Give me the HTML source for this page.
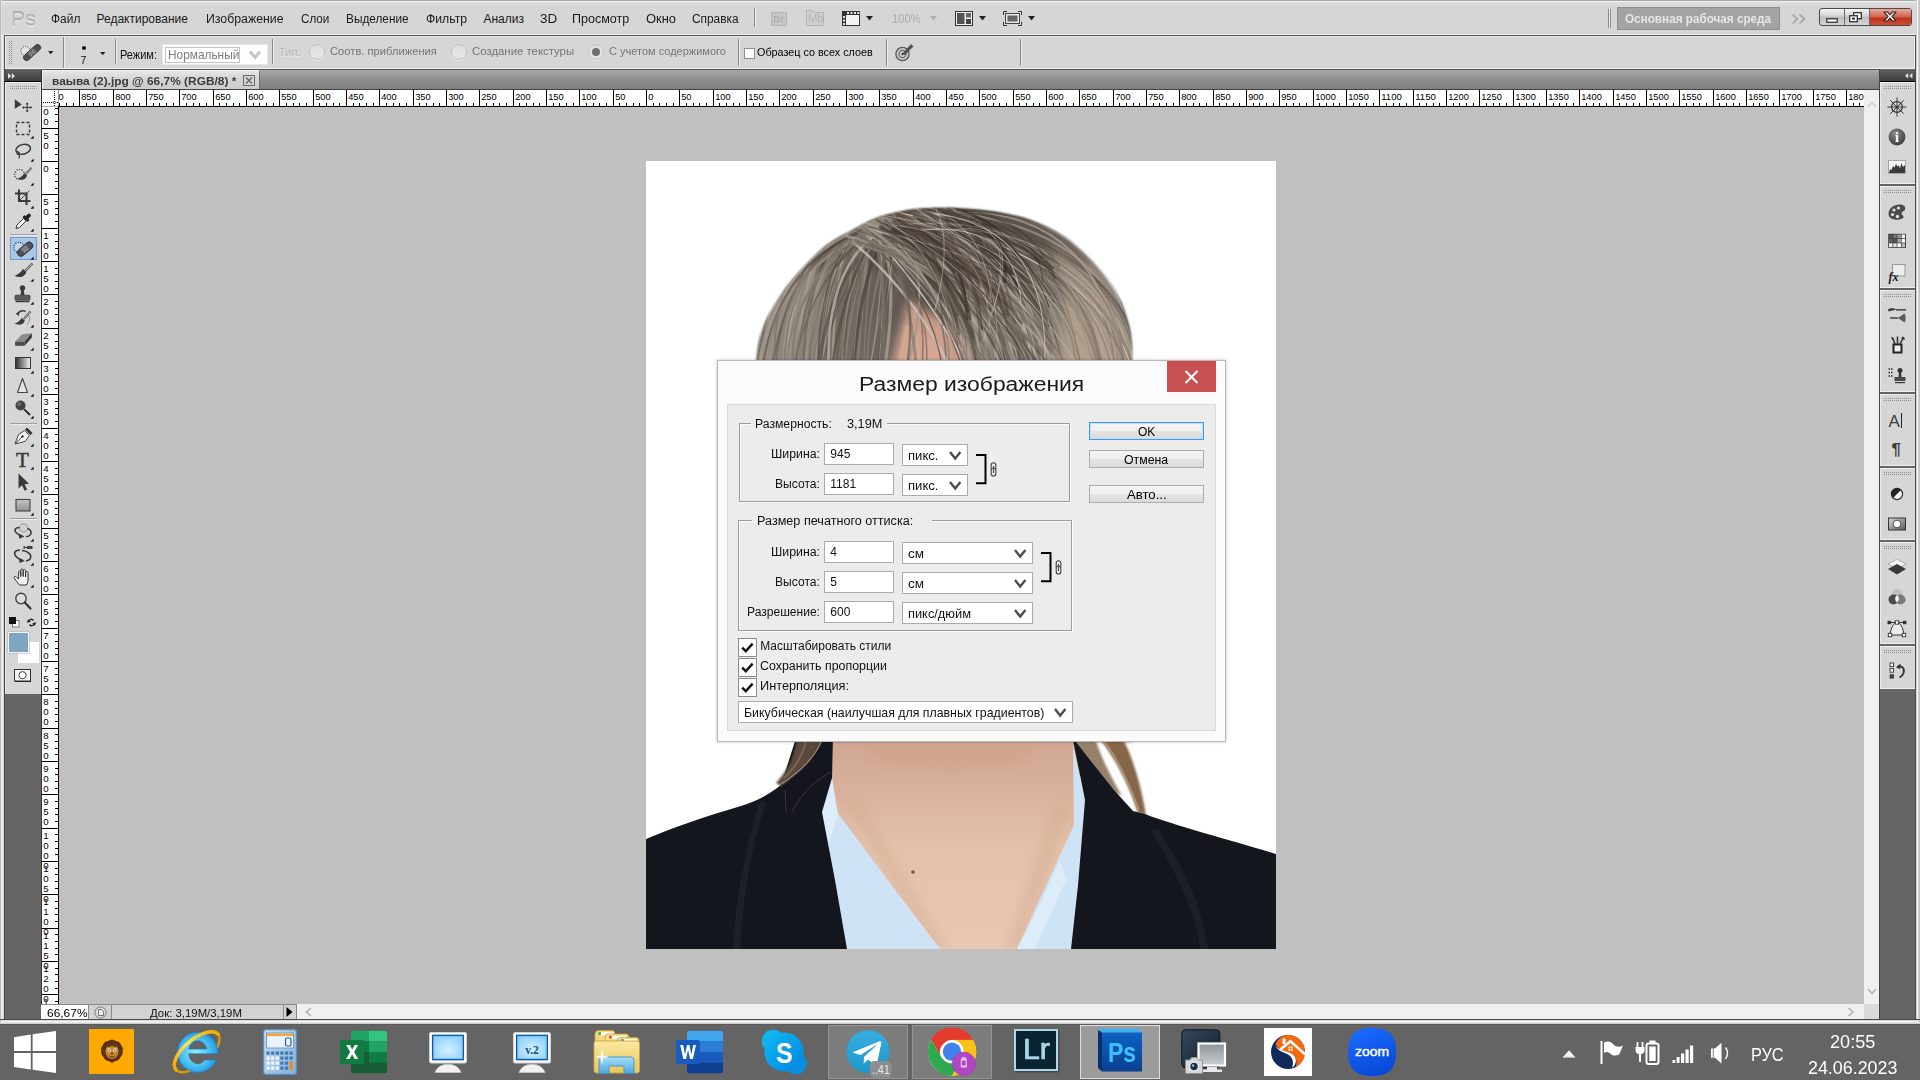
<!DOCTYPE html>
<html lang="ru"><head><meta charset="utf-8"><title>Adobe Photoshop</title>
<style>
html,body{margin:0;padding:0;}
body{width:1920px;height:1080px;overflow:hidden;background:#d6d6d6;position:relative;font-family:"Liberation Sans",sans-serif;}
div,span.t,svg{position:absolute;box-sizing:border-box;}
span.t{white-space:pre;transform-origin:0 50%;}
svg{overflow:visible;}
svg text{font-family:"Liberation Sans",sans-serif;}
</style></head><body>

<div style="left:0px;top:0px;width:1920px;height:1024px;background:#d6d6d6;"></div>
<div style="left:0px;top:0px;width:1920px;height:1px;background:#a8a8a8;"></div>
<div style="left:0px;top:1px;width:1920px;height:1px;background:#f0f0f0;"></div>
<div style="left:0px;top:2px;width:1920px;height:5px;background:linear-gradient(#dfdfdf,#d6d6d6);"></div>
<div style="left:4px;top:34px;width:1912px;height:1px;background:#ececec;"></div>
<div style="left:0px;top:0px;width:1px;height:1024px;background:#bcbcbc;"></div>
<div style="left:1px;top:0px;width:1px;height:1024px;background:#e2e2e2;"></div>
<div style="left:2px;top:35px;width:1px;height:989px;background:#f0f0f0;"></div>
<div style="left:3px;top:35px;width:1px;height:989px;background:#d4d4d4;"></div>
<div style="left:1916px;top:0px;width:1px;height:1024px;background:#d6d6d6;"></div>
<div style="left:1917px;top:0px;width:1px;height:1024px;background:#f4f4f4;"></div>
<div style="left:1918px;top:0px;width:1px;height:1024px;background:#d2d2d2;"></div>
<div style="left:1919px;top:0px;width:1px;height:1024px;background:#c4c4c4;"></div>
<div style="left:0px;top:1019px;width:1920px;height:1px;background:#4a4a4a;"></div>
<div style="left:0px;top:1020px;width:1920px;height:1px;background:#d8d8d8;"></div>
<div style="left:2px;top:1021px;width:1916px;height:1px;background:#f4f4f4;"></div>
<div style="left:0px;top:1022px;width:1920px;height:1px;background:#e6e6e6;"></div>
<div style="left:0px;top:1023px;width:1920px;height:1px;background:#cfcfcf;"></div>
<span class="t" style="left:11.12px;top:8.00px;font-size:21px;line-height:21px;color:#bdbdbd;transform:scaleX(1.0091);text-shadow:0 1px 0 #f4f4f4,0 -1px 0 #a8a8a8;">Ps</span>
<span class="t" style="left:51.22px;top:13.00px;font-size:12px;line-height:12px;color:#1a1a1a;transform:scaleX(0.9952);">Файл</span>
<span class="t" style="left:96.52px;top:13.00px;font-size:12px;line-height:12px;color:#1a1a1a;">Редактирование</span>
<span class="t" style="left:205.50px;top:13.00px;font-size:12px;line-height:12px;color:#1a1a1a;transform:scaleX(1.0260);">Изображение</span>
<span class="t" style="left:301.24px;top:13.00px;font-size:12px;line-height:12px;color:#1a1a1a;transform:scaleX(0.9719);">Слои</span>
<span class="t" style="left:346.13px;top:13.00px;font-size:12px;line-height:12px;color:#1a1a1a;transform:scaleX(0.9854);">Выделение</span>
<span class="t" style="left:425.51px;top:13.00px;font-size:12px;line-height:12px;color:#1a1a1a;transform:scaleX(1.0185);">Фильтр</span>
<span class="t" style="left:483.42px;top:13.00px;font-size:12px;line-height:12px;color:#1a1a1a;">Анализ</span>
<span class="t" style="left:539.92px;top:13.00px;font-size:12px;line-height:12px;color:#1a1a1a;transform:scaleX(1.1251);">3D</span>
<span class="t" style="left:572.49px;top:13.00px;font-size:12px;line-height:12px;color:#1a1a1a;transform:scaleX(1.0448);">Просмотр</span>
<span class="t" style="left:646.46px;top:13.00px;font-size:12px;line-height:12px;color:#1a1a1a;transform:scaleX(1.0780);">Окно</span>
<span class="t" style="left:692.23px;top:13.00px;font-size:12px;line-height:12px;color:#1a1a1a;transform:scaleX(0.9891);">Справка</span>
<div style="left:754px;top:8px;width:1px;height:19px;background:#8a8a8a;"></div>
<div style="left:755px;top:8px;width:1px;height:19px;background:#ececec;"></div>
<div style="left:771px;top:12px;width:16px;height:14px;background:#c6c6c6;border:1px solid #b4b4b4;border-radius:1px;"></div>
<span class="t" style="left:773.27px;top:15.00px;font-size:9px;line-height:9px;color:#ababab;transform:scaleX(1.2410);">Br</span>
<svg style="left:806px;top:10px;" width="18" height="16" viewBox="0 0 18 16"><path d="M0.5 15.5V0.5H6.5L8.5 2.5H17.5V15.5Z" fill="#d0d0d0" stroke="#b4b4b4"/></svg>
<span class="t" style="left:807.87px;top:13.00px;font-size:11.5px;line-height:11.5px;color:#b4b4b4;transform:scaleX(0.9762);">Mb</span>
<svg style="left:842px;top:11px;" width="18" height="15" viewBox="0 0 18 15"><rect x="0.5" y="0.5" width="17" height="14" fill="#f2f2f2" stroke="#333"/><rect x="0" y="0" width="18" height="4" fill="#333"/><rect x="0" y="0" width="4" height="15" fill="#333"/><g fill="#e8e8e8"><rect x="1" y="5" width="2" height="2"/><rect x="1" y="8.5" width="2" height="2"/><rect x="1" y="12" width="2" height="2"/><rect x="5" y="1" width="2" height="2"/><rect x="8.5" y="1" width="2" height="2"/><rect x="12" y="1" width="2" height="2"/><rect x="15.3" y="1" width="2" height="2"/></g></svg>
<svg style="left:866px;top:16px;" width="8" height="5" viewBox="0 0 8 5"><path d="M0 0H7L3.5 4.5Z" fill="#222"/></svg>
<span class="t" style="left:892.27px;top:13.00px;font-size:12px;line-height:12px;color:#ababab;transform:scaleX(0.9305);">100%</span>
<svg style="left:929.5px;top:16px;" width="8" height="5" viewBox="0 0 8 5"><path d="M0 0H7L3.5 4.5Z" fill="#b0b0b0"/></svg>
<svg style="left:955px;top:11px;" width="18" height="15" viewBox="0 0 18 15"><rect x="0.5" y="0.5" width="17" height="14" fill="#f0f0f0" stroke="#333"/><rect x="2" y="2" width="7.5" height="11" fill="#555"/><rect x="11" y="2" width="5" height="4.5" fill="#666"/><rect x="11" y="8" width="5" height="5" fill="#444"/></svg>
<svg style="left:979px;top:16px;" width="8" height="5" viewBox="0 0 8 5"><path d="M0 0H7L3.5 4.5Z" fill="#222"/></svg>
<svg style="left:1003px;top:11px;" width="19" height="15" viewBox="0 0 19 15"><path d="M0.5 4V0.5H4M15 0.5H18.5V4M18.5 11V14.5H15M4 14.5H0.5V11" fill="none" stroke="#333" stroke-width="1"/><rect x="2.5" y="2.5" width="14" height="10" fill="#e8e8e8" stroke="#444"/><rect x="4.5" y="4.5" width="10" height="6" fill="#666"/></svg>
<svg style="left:1027.5px;top:16px;" width="8" height="5" viewBox="0 0 8 5"><path d="M0 0H7L3.5 4.5Z" fill="#222"/></svg>
<div style="left:1608px;top:9px;width:1px;height:19px;background:#8a8a8a;"></div>
<div style="left:1609px;top:9px;width:1px;height:19px;background:#f0f0f0;"></div>
<div style="left:1610px;top:9px;width:1px;height:19px;background:#8a8a8a;"></div>
<div style="left:1617px;top:7px;width:163px;height:23px;background:#a3a3a3;border:1px solid #8f8f8f;"></div>
<span class="t" style="left:1624.74px;top:13.00px;font-size:12px;line-height:12px;color:#e6e6e6;font-weight:bold;transform:scaleX(0.9762);">Основная рабочая среда</span>
<svg style="left:1791px;top:13.5px;" width="15" height="10" viewBox="0 0 15 10"><path d="M0.5 0.5L5 5L0.5 9.5H3L7.5 5L3 0.5ZM7.5 0.5L12 5L7.5 9.5H10L14.5 5L10 0.5Z" fill="#a6a6a6"/></svg>
<div style="left:1819px;top:8px;width:93px;height:18px;border:1px solid #4a4a4a;border-radius:3px;overflow:hidden;background:linear-gradient(#f4f4f4,#d2d2d2 45%,#bcbcbc 50%,#d8d8d8);"><div style="left:24px;top:0;width:1px;height:18px;background:#6a6a6a"></div><div style="left:49px;top:0;width:1px;height:18px;background:#6a6a6a"></div><div style="left:50px;top:0;width:43px;height:18px;background:linear-gradient(#e8a89a,#d0604a 45%,#c0321a 50%,#d4553c);"></div></div>
<svg style="left:1826px;top:18px;" width="13" height="6" viewBox="0 0 13 6"><rect x="0.75" y="0.75" width="10.5" height="3.5" fill="#fff" stroke="#333" stroke-width="1.3"/></svg>
<svg style="left:1849px;top:12px;" width="14" height="11" viewBox="0 0 14 11"><rect x="4.7" y="0.7" width="7.6" height="6" fill="#fff" stroke="#333" stroke-width="1.3"/><rect x="0.7" y="3.7" width="7.6" height="6" fill="#fff" stroke="#333" stroke-width="1.3"/><rect x="3" y="5.6" width="3" height="2" fill="#333"/></svg>
<svg style="left:1883px;top:11px;" width="14" height="11" viewBox="0 0 14 11"><path d="M1 1H4.5L7 3.8L9.5 1H13L9 5.5L13 10H9.5L7 7.2L4.5 10H1L5 5.5Z" fill="#fff" stroke="#3a2a2a" stroke-width="1.2" stroke-linejoin="round"/></svg>
<div style="left:4px;top:35px;width:1912px;height:35px;background:#d6d6d6;border:1px solid #555;"></div>
<div style="left:5px;top:36px;width:1910px;height:1px;background:#e9e9e9;"></div>
<div style="left:5px;top:36px;width:1px;height:32px;background:#ececec;"></div>
<div style="left:5px;top:68px;width:1910px;height:1px;background:#f0f0f0;"></div>
<div style="left:1914px;top:36px;width:1px;height:33px;background:#f0f0f0;"></div>
<svg style="left:9px;top:41px;" width="3" height="24" viewBox="0 0 3 24"><rect x="0" y="0" width="1" height="1" fill="#8e8e8e"/><rect x="2" y="0" width="1" height="1" fill="#8e8e8e"/><rect x="0" y="2" width="1" height="1" fill="#8e8e8e"/><rect x="2" y="2" width="1" height="1" fill="#8e8e8e"/><rect x="0" y="4" width="1" height="1" fill="#8e8e8e"/><rect x="2" y="4" width="1" height="1" fill="#8e8e8e"/><rect x="0" y="6" width="1" height="1" fill="#8e8e8e"/><rect x="2" y="6" width="1" height="1" fill="#8e8e8e"/><rect x="0" y="8" width="1" height="1" fill="#8e8e8e"/><rect x="2" y="8" width="1" height="1" fill="#8e8e8e"/><rect x="0" y="10" width="1" height="1" fill="#8e8e8e"/><rect x="2" y="10" width="1" height="1" fill="#8e8e8e"/><rect x="0" y="12" width="1" height="1" fill="#8e8e8e"/><rect x="2" y="12" width="1" height="1" fill="#8e8e8e"/><rect x="0" y="14" width="1" height="1" fill="#8e8e8e"/><rect x="2" y="14" width="1" height="1" fill="#8e8e8e"/><rect x="0" y="16" width="1" height="1" fill="#8e8e8e"/><rect x="2" y="16" width="1" height="1" fill="#8e8e8e"/><rect x="0" y="18" width="1" height="1" fill="#8e8e8e"/><rect x="2" y="18" width="1" height="1" fill="#8e8e8e"/><rect x="0" y="20" width="1" height="1" fill="#8e8e8e"/><rect x="2" y="20" width="1" height="1" fill="#8e8e8e"/><rect x="0" y="22" width="1" height="1" fill="#8e8e8e"/><rect x="2" y="22" width="1" height="1" fill="#8e8e8e"/></svg>
<svg style="left:20px;top:43px;" width="21" height="19" viewBox="0 0 21 19"><circle cx="5.5" cy="8" r="4.6" fill="#e4e4e4" stroke="#333" stroke-width="1" stroke-dasharray="1 1.3"/><g transform="rotate(-42 12 9.5)"><rect x="1.5" y="6.5" width="21" height="6.2" rx="3.1" fill="#4e4e4e" stroke="#333" stroke-width="0.8"/><rect x="8" y="6.9" width="8" height="5.4" fill="#6e6e6e"/><g fill="#c8c8c8"><circle cx="10" cy="8.4" r="0.55"/><circle cx="14" cy="8.4" r="0.55"/><circle cx="10" cy="10.8" r="0.55"/><circle cx="14" cy="10.8" r="0.55"/><circle cx="12" cy="9.6" r="0.55"/></g></g></svg>
<svg style="left:48px;top:51px;" width="6" height="4" viewBox="0 0 6 4"><path d="M0 0H5.5L2.75 3.2Z" fill="#222"/></svg>
<div style="left:63px;top:37px;width:1px;height:31px;background:#8c8c8c;"></div>
<div style="left:64px;top:37px;width:1px;height:31px;background:#ececec;"></div>
<div style="left:81.5px;top:45.5px;width:4px;height:4px;background:#111;border-radius:2px;"></div>
<span class="t" style="left:80.50px;top:55.00px;font-size:10.5px;line-height:10.5px;color:#111;">7</span>
<svg style="left:100px;top:52px;" width="6" height="4" viewBox="0 0 6 4"><path d="M0 0H5.5L2.75 3.2Z" fill="#222"/></svg>
<div style="left:115px;top:39px;width:1px;height:25px;background:#8c8c8c;"></div>
<div style="left:116px;top:39px;width:1px;height:25px;background:#ececec;"></div>
<span class="t" style="left:119.69px;top:49.00px;font-size:12px;line-height:12px;color:#111;transform:scaleX(0.9164);">Режим:</span>
<div style="left:162px;top:44px;width:106px;height:21px;background:#fdfdfd;border:1px solid #e8e8e8;"></div>
<div style="left:164.5px;top:46.5px;width:75px;height:16px;background:#fff;border:1px solid #c4c4c4;"></div>
<span class="t" style="left:167.63px;top:48.00px;font-size:13px;line-height:13px;color:#7c7c7c;transform:scaleX(0.9121);">Нормальный</span>
<svg style="left:248.5px;top:50px;" width="12" height="10" viewBox="0 0 12 10"><path d="M1 1.5L6 7.4L11 1.5" fill="none" stroke="#c6c6c6" stroke-width="2.9"/></svg>
<div style="left:272px;top:39px;width:1px;height:25px;background:#8c8c8c;"></div>
<div style="left:273px;top:39px;width:1px;height:25px;background:#ececec;"></div>
<span class="t" style="left:278.45px;top:47.00px;font-size:11.5px;line-height:11.5px;color:#b4b4b4;text-shadow:0 1px 0 #f2f2f2;">Тип:</span>
<div style="left:309px;top:44px;width:16px;height:16px;background:linear-gradient(#dedede,#e6e6e6);border:1px solid #c2c2c2;border-radius:8px;box-shadow:0 1px 0 #eeeeee;"></div>
<div style="left:451.2px;top:44px;width:16px;height:16px;background:linear-gradient(#dedede,#e6e6e6);border:1px solid #c2c2c2;border-radius:8px;box-shadow:0 1px 0 #eeeeee;"></div>
<div style="left:588.2px;top:44px;width:16px;height:16px;background:linear-gradient(#dedede,#e6e6e6);border:1px solid #c2c2c2;border-radius:8px;box-shadow:0 1px 0 #eeeeee;"><div style="left:3px;top:3px;width:8px;height:8px;border-radius:4px;background:#6e6e6e"></div></div>
<span class="t" style="left:330.07px;top:46.00px;font-size:11.5px;line-height:11.5px;color:#757575;transform:scaleX(0.9722);">Соотв. приближения</span>
<span class="t" style="left:471.96px;top:46.00px;font-size:11.5px;line-height:11.5px;color:#757575;transform:scaleX(0.9894);">Создание текстуры</span>
<span class="t" style="left:609.08px;top:46.00px;font-size:11.5px;line-height:11.5px;color:#757575;transform:scaleX(0.9568);">С учетом содержимого</span>
<div style="left:738px;top:39px;width:1px;height:27px;background:#8c8c8c;"></div>
<div style="left:739px;top:39px;width:1px;height:27px;background:#ececec;"></div>
<div style="left:744px;top:48px;width:11px;height:11px;background:#fff;border:1px solid #8e8e8e;"></div>
<span class="t" style="left:757.00px;top:47.00px;font-size:11.5px;line-height:11.5px;color:#000;transform:scaleX(0.9384);">Образец со всех слоев</span>
<div style="left:886px;top:39px;width:1px;height:27px;background:#8c8c8c;"></div>
<div style="left:887px;top:39px;width:1px;height:27px;background:#ececec;"></div>
<svg style="left:895px;top:43px;" width="19" height="19" viewBox="0 0 19 19"><circle cx="7.5" cy="11" r="6.6" fill="#d0d0d0" stroke="#555" stroke-width="1.3"/><circle cx="7.5" cy="11" r="3.6" fill="none" stroke="#666" stroke-width="1.2"/><circle cx="7.5" cy="11" r="1.2" fill="#444"/><path d="M8 10.5L16 1.5L18 3.5L9.5 12Z" fill="#555" stroke="#333" stroke-width="0.6"/></svg>
<div style="left:1020px;top:39px;width:1px;height:27px;background:#8c8c8c;"></div>
<div style="left:1021px;top:39px;width:1px;height:27px;background:#ececec;"></div>
<div style="left:4px;top:69px;width:37px;height:950px;background:#656565;"></div>
<div style="left:4px;top:69px;width:1px;height:950px;background:#444;"></div>
<div style="left:5px;top:70px;width:36px;height:11px;background:linear-gradient(#5e5e5e,#3e3e3e);"></div>
<div style="left:5px;top:81px;width:36px;height:1px;background:#000;"></div>
<svg style="left:8px;top:72.5px;" width="8" height="6" viewBox="0 0 8 6"><path d="M0 0L3.2 3L0 6ZM3.8 0L7 3L3.8 6Z" fill="#e0e0e0"/></svg>
<div style="left:5px;top:82px;width:36px;height:612px;background:#d6d6d6;"></div>
<div style="left:5px;top:82px;width:36px;height:1px;background:#f0f0f0;"></div>
<div style="left:5px;top:82px;width:1px;height:612px;background:#ececec;"></div>
<div style="left:40px;top:82px;width:1px;height:612px;background:#e6e6e6;"></div>
<svg style="left:10px;top:86px;" width="28" height="3" viewBox="0 0 28 3"><rect x="0" y="0" width="1" height="1" fill="#8e8e8e"/><rect x="0" y="2" width="1" height="1" fill="#8e8e8e"/><rect x="2" y="0" width="1" height="1" fill="#8e8e8e"/><rect x="2" y="2" width="1" height="1" fill="#8e8e8e"/><rect x="4" y="0" width="1" height="1" fill="#8e8e8e"/><rect x="4" y="2" width="1" height="1" fill="#8e8e8e"/><rect x="6" y="0" width="1" height="1" fill="#8e8e8e"/><rect x="6" y="2" width="1" height="1" fill="#8e8e8e"/><rect x="8" y="0" width="1" height="1" fill="#8e8e8e"/><rect x="8" y="2" width="1" height="1" fill="#8e8e8e"/><rect x="10" y="0" width="1" height="1" fill="#8e8e8e"/><rect x="10" y="2" width="1" height="1" fill="#8e8e8e"/><rect x="12" y="0" width="1" height="1" fill="#8e8e8e"/><rect x="12" y="2" width="1" height="1" fill="#8e8e8e"/><rect x="14" y="0" width="1" height="1" fill="#8e8e8e"/><rect x="14" y="2" width="1" height="1" fill="#8e8e8e"/><rect x="16" y="0" width="1" height="1" fill="#8e8e8e"/><rect x="16" y="2" width="1" height="1" fill="#8e8e8e"/><rect x="18" y="0" width="1" height="1" fill="#8e8e8e"/><rect x="18" y="2" width="1" height="1" fill="#8e8e8e"/><rect x="20" y="0" width="1" height="1" fill="#8e8e8e"/><rect x="20" y="2" width="1" height="1" fill="#8e8e8e"/><rect x="22" y="0" width="1" height="1" fill="#8e8e8e"/><rect x="22" y="2" width="1" height="1" fill="#8e8e8e"/><rect x="24" y="0" width="1" height="1" fill="#8e8e8e"/><rect x="24" y="2" width="1" height="1" fill="#8e8e8e"/><rect x="26" y="0" width="1" height="1" fill="#8e8e8e"/><rect x="26" y="2" width="1" height="1" fill="#8e8e8e"/></svg>
<div style="left:10px;top:234px;width:27px;height:1px;background:#9d9d9d;"></div>
<div style="left:10px;top:235px;width:27px;height:1px;background:#ececec;"></div>
<div style="left:10px;top:423px;width:27px;height:1px;background:#9d9d9d;"></div>
<div style="left:10px;top:424px;width:27px;height:1px;background:#ececec;"></div>
<div style="left:10px;top:518px;width:27px;height:1px;background:#9d9d9d;"></div>
<div style="left:10px;top:519px;width:27px;height:1px;background:#ececec;"></div>
<div style="left:10px;top:237px;width:27px;height:23px;background:#a9c7e8;border:1px solid #6f9dcf;"></div>
<div style="left:1879px;top:69px;width:37px;height:950px;background:#656565;"></div>
<div style="left:1880px;top:70px;width:35px;height:11px;background:linear-gradient(#5e5e5e,#3e3e3e);"></div>
<div style="left:1880px;top:81px;width:35px;height:1px;background:#000;"></div>
<svg style="left:1904.7px;top:72.8px;" width="8" height="6" viewBox="0 0 8 6"><path d="M3.2 0L0 2.7L3.2 5.4ZM7.4 0L4.2 2.7L7.4 5.4Z" fill="#e0e0e0"/></svg>
<div style="left:1880px;top:82px;width:35px;height:102px;background:#d6d6d6;border-top:1px solid #f0f0f0;border-left:1px solid #ececec;border-bottom:1px solid #efefef;"></div>
<svg style="left:1884px;top:86px;" width="28" height="3" viewBox="0 0 28 3"><rect x="0" y="0" width="1" height="1" fill="#8e8e8e"/><rect x="0" y="2" width="1" height="1" fill="#8e8e8e"/><rect x="2" y="0" width="1" height="1" fill="#8e8e8e"/><rect x="2" y="2" width="1" height="1" fill="#8e8e8e"/><rect x="4" y="0" width="1" height="1" fill="#8e8e8e"/><rect x="4" y="2" width="1" height="1" fill="#8e8e8e"/><rect x="6" y="0" width="1" height="1" fill="#8e8e8e"/><rect x="6" y="2" width="1" height="1" fill="#8e8e8e"/><rect x="8" y="0" width="1" height="1" fill="#8e8e8e"/><rect x="8" y="2" width="1" height="1" fill="#8e8e8e"/><rect x="10" y="0" width="1" height="1" fill="#8e8e8e"/><rect x="10" y="2" width="1" height="1" fill="#8e8e8e"/><rect x="12" y="0" width="1" height="1" fill="#8e8e8e"/><rect x="12" y="2" width="1" height="1" fill="#8e8e8e"/><rect x="14" y="0" width="1" height="1" fill="#8e8e8e"/><rect x="14" y="2" width="1" height="1" fill="#8e8e8e"/><rect x="16" y="0" width="1" height="1" fill="#8e8e8e"/><rect x="16" y="2" width="1" height="1" fill="#8e8e8e"/><rect x="18" y="0" width="1" height="1" fill="#8e8e8e"/><rect x="18" y="2" width="1" height="1" fill="#8e8e8e"/><rect x="20" y="0" width="1" height="1" fill="#8e8e8e"/><rect x="20" y="2" width="1" height="1" fill="#8e8e8e"/><rect x="22" y="0" width="1" height="1" fill="#8e8e8e"/><rect x="22" y="2" width="1" height="1" fill="#8e8e8e"/><rect x="24" y="0" width="1" height="1" fill="#8e8e8e"/><rect x="24" y="2" width="1" height="1" fill="#8e8e8e"/><rect x="26" y="0" width="1" height="1" fill="#8e8e8e"/><rect x="26" y="2" width="1" height="1" fill="#8e8e8e"/></svg>
<div style="left:1880px;top:186px;width:35px;height:102px;background:#d6d6d6;border-top:1px solid #f0f0f0;border-left:1px solid #ececec;border-bottom:1px solid #efefef;"></div>
<svg style="left:1884px;top:190px;" width="28" height="3" viewBox="0 0 28 3"><rect x="0" y="0" width="1" height="1" fill="#8e8e8e"/><rect x="0" y="2" width="1" height="1" fill="#8e8e8e"/><rect x="2" y="0" width="1" height="1" fill="#8e8e8e"/><rect x="2" y="2" width="1" height="1" fill="#8e8e8e"/><rect x="4" y="0" width="1" height="1" fill="#8e8e8e"/><rect x="4" y="2" width="1" height="1" fill="#8e8e8e"/><rect x="6" y="0" width="1" height="1" fill="#8e8e8e"/><rect x="6" y="2" width="1" height="1" fill="#8e8e8e"/><rect x="8" y="0" width="1" height="1" fill="#8e8e8e"/><rect x="8" y="2" width="1" height="1" fill="#8e8e8e"/><rect x="10" y="0" width="1" height="1" fill="#8e8e8e"/><rect x="10" y="2" width="1" height="1" fill="#8e8e8e"/><rect x="12" y="0" width="1" height="1" fill="#8e8e8e"/><rect x="12" y="2" width="1" height="1" fill="#8e8e8e"/><rect x="14" y="0" width="1" height="1" fill="#8e8e8e"/><rect x="14" y="2" width="1" height="1" fill="#8e8e8e"/><rect x="16" y="0" width="1" height="1" fill="#8e8e8e"/><rect x="16" y="2" width="1" height="1" fill="#8e8e8e"/><rect x="18" y="0" width="1" height="1" fill="#8e8e8e"/><rect x="18" y="2" width="1" height="1" fill="#8e8e8e"/><rect x="20" y="0" width="1" height="1" fill="#8e8e8e"/><rect x="20" y="2" width="1" height="1" fill="#8e8e8e"/><rect x="22" y="0" width="1" height="1" fill="#8e8e8e"/><rect x="22" y="2" width="1" height="1" fill="#8e8e8e"/><rect x="24" y="0" width="1" height="1" fill="#8e8e8e"/><rect x="24" y="2" width="1" height="1" fill="#8e8e8e"/><rect x="26" y="0" width="1" height="1" fill="#8e8e8e"/><rect x="26" y="2" width="1" height="1" fill="#8e8e8e"/></svg>
<div style="left:1880px;top:290px;width:35px;height:102px;background:#d6d6d6;border-top:1px solid #f0f0f0;border-left:1px solid #ececec;border-bottom:1px solid #efefef;"></div>
<svg style="left:1884px;top:294px;" width="28" height="3" viewBox="0 0 28 3"><rect x="0" y="0" width="1" height="1" fill="#8e8e8e"/><rect x="0" y="2" width="1" height="1" fill="#8e8e8e"/><rect x="2" y="0" width="1" height="1" fill="#8e8e8e"/><rect x="2" y="2" width="1" height="1" fill="#8e8e8e"/><rect x="4" y="0" width="1" height="1" fill="#8e8e8e"/><rect x="4" y="2" width="1" height="1" fill="#8e8e8e"/><rect x="6" y="0" width="1" height="1" fill="#8e8e8e"/><rect x="6" y="2" width="1" height="1" fill="#8e8e8e"/><rect x="8" y="0" width="1" height="1" fill="#8e8e8e"/><rect x="8" y="2" width="1" height="1" fill="#8e8e8e"/><rect x="10" y="0" width="1" height="1" fill="#8e8e8e"/><rect x="10" y="2" width="1" height="1" fill="#8e8e8e"/><rect x="12" y="0" width="1" height="1" fill="#8e8e8e"/><rect x="12" y="2" width="1" height="1" fill="#8e8e8e"/><rect x="14" y="0" width="1" height="1" fill="#8e8e8e"/><rect x="14" y="2" width="1" height="1" fill="#8e8e8e"/><rect x="16" y="0" width="1" height="1" fill="#8e8e8e"/><rect x="16" y="2" width="1" height="1" fill="#8e8e8e"/><rect x="18" y="0" width="1" height="1" fill="#8e8e8e"/><rect x="18" y="2" width="1" height="1" fill="#8e8e8e"/><rect x="20" y="0" width="1" height="1" fill="#8e8e8e"/><rect x="20" y="2" width="1" height="1" fill="#8e8e8e"/><rect x="22" y="0" width="1" height="1" fill="#8e8e8e"/><rect x="22" y="2" width="1" height="1" fill="#8e8e8e"/><rect x="24" y="0" width="1" height="1" fill="#8e8e8e"/><rect x="24" y="2" width="1" height="1" fill="#8e8e8e"/><rect x="26" y="0" width="1" height="1" fill="#8e8e8e"/><rect x="26" y="2" width="1" height="1" fill="#8e8e8e"/></svg>
<div style="left:1880px;top:394px;width:35px;height:72px;background:#d6d6d6;border-top:1px solid #f0f0f0;border-left:1px solid #ececec;border-bottom:1px solid #efefef;"></div>
<svg style="left:1884px;top:398px;" width="28" height="3" viewBox="0 0 28 3"><rect x="0" y="0" width="1" height="1" fill="#8e8e8e"/><rect x="0" y="2" width="1" height="1" fill="#8e8e8e"/><rect x="2" y="0" width="1" height="1" fill="#8e8e8e"/><rect x="2" y="2" width="1" height="1" fill="#8e8e8e"/><rect x="4" y="0" width="1" height="1" fill="#8e8e8e"/><rect x="4" y="2" width="1" height="1" fill="#8e8e8e"/><rect x="6" y="0" width="1" height="1" fill="#8e8e8e"/><rect x="6" y="2" width="1" height="1" fill="#8e8e8e"/><rect x="8" y="0" width="1" height="1" fill="#8e8e8e"/><rect x="8" y="2" width="1" height="1" fill="#8e8e8e"/><rect x="10" y="0" width="1" height="1" fill="#8e8e8e"/><rect x="10" y="2" width="1" height="1" fill="#8e8e8e"/><rect x="12" y="0" width="1" height="1" fill="#8e8e8e"/><rect x="12" y="2" width="1" height="1" fill="#8e8e8e"/><rect x="14" y="0" width="1" height="1" fill="#8e8e8e"/><rect x="14" y="2" width="1" height="1" fill="#8e8e8e"/><rect x="16" y="0" width="1" height="1" fill="#8e8e8e"/><rect x="16" y="2" width="1" height="1" fill="#8e8e8e"/><rect x="18" y="0" width="1" height="1" fill="#8e8e8e"/><rect x="18" y="2" width="1" height="1" fill="#8e8e8e"/><rect x="20" y="0" width="1" height="1" fill="#8e8e8e"/><rect x="20" y="2" width="1" height="1" fill="#8e8e8e"/><rect x="22" y="0" width="1" height="1" fill="#8e8e8e"/><rect x="22" y="2" width="1" height="1" fill="#8e8e8e"/><rect x="24" y="0" width="1" height="1" fill="#8e8e8e"/><rect x="24" y="2" width="1" height="1" fill="#8e8e8e"/><rect x="26" y="0" width="1" height="1" fill="#8e8e8e"/><rect x="26" y="2" width="1" height="1" fill="#8e8e8e"/></svg>
<div style="left:1880px;top:468px;width:35px;height:72px;background:#d6d6d6;border-top:1px solid #f0f0f0;border-left:1px solid #ececec;border-bottom:1px solid #efefef;"></div>
<svg style="left:1884px;top:472px;" width="28" height="3" viewBox="0 0 28 3"><rect x="0" y="0" width="1" height="1" fill="#8e8e8e"/><rect x="0" y="2" width="1" height="1" fill="#8e8e8e"/><rect x="2" y="0" width="1" height="1" fill="#8e8e8e"/><rect x="2" y="2" width="1" height="1" fill="#8e8e8e"/><rect x="4" y="0" width="1" height="1" fill="#8e8e8e"/><rect x="4" y="2" width="1" height="1" fill="#8e8e8e"/><rect x="6" y="0" width="1" height="1" fill="#8e8e8e"/><rect x="6" y="2" width="1" height="1" fill="#8e8e8e"/><rect x="8" y="0" width="1" height="1" fill="#8e8e8e"/><rect x="8" y="2" width="1" height="1" fill="#8e8e8e"/><rect x="10" y="0" width="1" height="1" fill="#8e8e8e"/><rect x="10" y="2" width="1" height="1" fill="#8e8e8e"/><rect x="12" y="0" width="1" height="1" fill="#8e8e8e"/><rect x="12" y="2" width="1" height="1" fill="#8e8e8e"/><rect x="14" y="0" width="1" height="1" fill="#8e8e8e"/><rect x="14" y="2" width="1" height="1" fill="#8e8e8e"/><rect x="16" y="0" width="1" height="1" fill="#8e8e8e"/><rect x="16" y="2" width="1" height="1" fill="#8e8e8e"/><rect x="18" y="0" width="1" height="1" fill="#8e8e8e"/><rect x="18" y="2" width="1" height="1" fill="#8e8e8e"/><rect x="20" y="0" width="1" height="1" fill="#8e8e8e"/><rect x="20" y="2" width="1" height="1" fill="#8e8e8e"/><rect x="22" y="0" width="1" height="1" fill="#8e8e8e"/><rect x="22" y="2" width="1" height="1" fill="#8e8e8e"/><rect x="24" y="0" width="1" height="1" fill="#8e8e8e"/><rect x="24" y="2" width="1" height="1" fill="#8e8e8e"/><rect x="26" y="0" width="1" height="1" fill="#8e8e8e"/><rect x="26" y="2" width="1" height="1" fill="#8e8e8e"/></svg>
<div style="left:1880px;top:542px;width:35px;height:102px;background:#d6d6d6;border-top:1px solid #f0f0f0;border-left:1px solid #ececec;border-bottom:1px solid #efefef;"></div>
<svg style="left:1884px;top:546px;" width="28" height="3" viewBox="0 0 28 3"><rect x="0" y="0" width="1" height="1" fill="#8e8e8e"/><rect x="0" y="2" width="1" height="1" fill="#8e8e8e"/><rect x="2" y="0" width="1" height="1" fill="#8e8e8e"/><rect x="2" y="2" width="1" height="1" fill="#8e8e8e"/><rect x="4" y="0" width="1" height="1" fill="#8e8e8e"/><rect x="4" y="2" width="1" height="1" fill="#8e8e8e"/><rect x="6" y="0" width="1" height="1" fill="#8e8e8e"/><rect x="6" y="2" width="1" height="1" fill="#8e8e8e"/><rect x="8" y="0" width="1" height="1" fill="#8e8e8e"/><rect x="8" y="2" width="1" height="1" fill="#8e8e8e"/><rect x="10" y="0" width="1" height="1" fill="#8e8e8e"/><rect x="10" y="2" width="1" height="1" fill="#8e8e8e"/><rect x="12" y="0" width="1" height="1" fill="#8e8e8e"/><rect x="12" y="2" width="1" height="1" fill="#8e8e8e"/><rect x="14" y="0" width="1" height="1" fill="#8e8e8e"/><rect x="14" y="2" width="1" height="1" fill="#8e8e8e"/><rect x="16" y="0" width="1" height="1" fill="#8e8e8e"/><rect x="16" y="2" width="1" height="1" fill="#8e8e8e"/><rect x="18" y="0" width="1" height="1" fill="#8e8e8e"/><rect x="18" y="2" width="1" height="1" fill="#8e8e8e"/><rect x="20" y="0" width="1" height="1" fill="#8e8e8e"/><rect x="20" y="2" width="1" height="1" fill="#8e8e8e"/><rect x="22" y="0" width="1" height="1" fill="#8e8e8e"/><rect x="22" y="2" width="1" height="1" fill="#8e8e8e"/><rect x="24" y="0" width="1" height="1" fill="#8e8e8e"/><rect x="24" y="2" width="1" height="1" fill="#8e8e8e"/><rect x="26" y="0" width="1" height="1" fill="#8e8e8e"/><rect x="26" y="2" width="1" height="1" fill="#8e8e8e"/></svg>
<div style="left:1880px;top:646px;width:35px;height:43px;background:#d6d6d6;border-top:1px solid #f0f0f0;border-left:1px solid #ececec;border-bottom:1px solid #efefef;"></div>
<svg style="left:1884px;top:650px;" width="28" height="3" viewBox="0 0 28 3"><rect x="0" y="0" width="1" height="1" fill="#8e8e8e"/><rect x="0" y="2" width="1" height="1" fill="#8e8e8e"/><rect x="2" y="0" width="1" height="1" fill="#8e8e8e"/><rect x="2" y="2" width="1" height="1" fill="#8e8e8e"/><rect x="4" y="0" width="1" height="1" fill="#8e8e8e"/><rect x="4" y="2" width="1" height="1" fill="#8e8e8e"/><rect x="6" y="0" width="1" height="1" fill="#8e8e8e"/><rect x="6" y="2" width="1" height="1" fill="#8e8e8e"/><rect x="8" y="0" width="1" height="1" fill="#8e8e8e"/><rect x="8" y="2" width="1" height="1" fill="#8e8e8e"/><rect x="10" y="0" width="1" height="1" fill="#8e8e8e"/><rect x="10" y="2" width="1" height="1" fill="#8e8e8e"/><rect x="12" y="0" width="1" height="1" fill="#8e8e8e"/><rect x="12" y="2" width="1" height="1" fill="#8e8e8e"/><rect x="14" y="0" width="1" height="1" fill="#8e8e8e"/><rect x="14" y="2" width="1" height="1" fill="#8e8e8e"/><rect x="16" y="0" width="1" height="1" fill="#8e8e8e"/><rect x="16" y="2" width="1" height="1" fill="#8e8e8e"/><rect x="18" y="0" width="1" height="1" fill="#8e8e8e"/><rect x="18" y="2" width="1" height="1" fill="#8e8e8e"/><rect x="20" y="0" width="1" height="1" fill="#8e8e8e"/><rect x="20" y="2" width="1" height="1" fill="#8e8e8e"/><rect x="22" y="0" width="1" height="1" fill="#8e8e8e"/><rect x="22" y="2" width="1" height="1" fill="#8e8e8e"/><rect x="24" y="0" width="1" height="1" fill="#8e8e8e"/><rect x="24" y="2" width="1" height="1" fill="#8e8e8e"/><rect x="26" y="0" width="1" height="1" fill="#8e8e8e"/><rect x="26" y="2" width="1" height="1" fill="#8e8e8e"/></svg>
<div style="left:1879px;top:69px;width:1px;height:950px;background:#444;"></div>
<div style="left:1915px;top:35px;width:1px;height:984px;background:#4c4c4c;"></div>
<div style="left:41px;top:69px;width:1838px;height:1px;background:#555;"></div>
<div style="left:41px;top:70px;width:1838px;height:19px;background:linear-gradient(#a8a8a8,#8c8c8c 55%,#7e7e7e);"></div>
<div style="left:42px;top:70px;width:218px;height:19px;background:linear-gradient(#e6e6e6,#d6d6d6 40%,#cccccc);border-right:1px solid #6e6e6e;border-top:1px solid #f2f2f2;border-left:1px solid #f0f0f0;"></div>
<span class="t" style="left:51.73px;top:76.00px;font-size:11px;line-height:11px;color:#3c3c3c;font-weight:bold;transform:scaleX(1.0825);">ваыва (2).jpg @ 66,7% (RGB/8) *</span>
<svg style="left:243px;top:75px;" width="12" height="11" viewBox="0 0 12 11"><rect x="0.5" y="0.5" width="11" height="10" fill="#d4d4d4" stroke="#6c6c6c"/><path d="M3 2.5L9 8.5M9 2.5L3 8.5" stroke="#666" stroke-width="1.3"/></svg>
<div style="left:41px;top:89px;width:1838px;height:1px;background:#444;"></div>
<div style="left:41px;top:70px;width:1px;height:949px;background:#333;"></div>
<div style="left:59px;top:107px;width:1805px;height:897px;background:#c0c0c0;"></div>
<div style="left:42px;top:90px;width:1822px;height:16px;background:#fff;"></div>
<div style="left:42px;top:90px;width:16px;height:914px;background:#fff;"></div>
<svg style="left:42px;top:90px;" width="16" height="16" viewBox="0 0 16 16"><rect x="1" y="12" width="1" height="1" fill="#000"/><rect x="3" y="12" width="1" height="1" fill="#000"/><rect x="5" y="12" width="1" height="1" fill="#000"/><rect x="7" y="12" width="1" height="1" fill="#000"/><rect x="9" y="12" width="1" height="1" fill="#000"/><rect x="11" y="12" width="1" height="1" fill="#000"/><rect x="13" y="12" width="1" height="1" fill="#000"/><rect x="15" y="12" width="1" height="1" fill="#000"/><rect x="12" y="1" width="1" height="1" fill="#000"/><rect x="12" y="3" width="1" height="1" fill="#000"/><rect x="12" y="5" width="1" height="1" fill="#000"/><rect x="12" y="7" width="1" height="1" fill="#000"/><rect x="12" y="9" width="1" height="1" fill="#000"/><rect x="12" y="11" width="1" height="1" fill="#000"/><rect x="12" y="13" width="1" height="1" fill="#000"/><rect x="12" y="15" width="1" height="1" fill="#000"/><path d="M12.5 11L14 12.5L12.5 14L11 12.5Z" fill="#fff" stroke="#000" stroke-width="0.7"/></svg>
<div style="left:58px;top:90px;width:1px;height:16px;background:#9a9a9a;"></div>
<div style="left:59px;top:90px;width:1805px;height:16px;overflow:hidden;"><svg style="left:-59px;top:-90px" width="1920" height="120" viewBox="0 0 1920 120"><path d="M59.5 103V106 M66.5 103V106 M73.5 103V106 M79.5 90V106 M86.5 103V106 M93.5 103V106 M99.5 103V106 M106.5 103V106 M113.5 90V106 M119.5 103V106 M126.5 103V106 M133.5 103V106 M139.5 103V106 M146.5 90V106 M153.5 103V106 M159.5 103V106 M166.5 103V106 M173.5 103V106 M179.5 90V106 M186.5 103V106 M193.5 103V106 M199.5 103V106 M206.5 103V106 M213.5 90V106 M219.5 103V106 M226.5 103V106 M233.5 103V106 M239.5 103V106 M246.5 90V106 M253.5 103V106 M259.5 103V106 M266.5 103V106 M273.5 103V106 M279.5 90V106 M286.5 103V106 M293.5 103V106 M299.5 103V106 M306.5 103V106 M313.5 90V106 M319.5 103V106 M326.5 103V106 M333.5 103V106 M339.5 103V106 M346.5 90V106 M353.5 103V106 M359.5 103V106 M366.5 103V106 M373.5 103V106 M379.5 90V106 M386.5 103V106 M393.5 103V106 M399.5 103V106 M406.5 103V106 M413.5 90V106 M419.5 103V106 M426.5 103V106 M433.5 103V106 M439.5 103V106 M446.5 90V106 M453.5 103V106 M459.5 103V106 M466.5 103V106 M473.5 103V106 M479.5 90V106 M486.5 103V106 M493.5 103V106 M499.5 103V106 M506.5 103V106 M513.5 90V106 M519.5 103V106 M526.5 103V106 M533.5 103V106 M539.5 103V106 M546.5 90V106 M553.5 103V106 M559.5 103V106 M566.5 103V106 M573.5 103V106 M579.5 90V106 M586.5 103V106 M593.5 103V106 M599.5 103V106 M606.5 103V106 M613.5 90V106 M619.5 103V106 M626.5 103V106 M633.5 103V106 M639.5 103V106 M646.5 90V106 M653.5 103V106 M659.5 103V106 M666.5 103V106 M673.5 103V106 M679.5 90V106 M686.5 103V106 M693.5 103V106 M699.5 103V106 M706.5 103V106 M713.5 90V106 M719.5 103V106 M726.5 103V106 M733.5 103V106 M739.5 103V106 M746.5 90V106 M753.5 103V106 M759.5 103V106 M766.5 103V106 M773.5 103V106 M779.5 90V106 M786.5 103V106 M793.5 103V106 M799.5 103V106 M806.5 103V106 M813.5 90V106 M819.5 103V106 M826.5 103V106 M833.5 103V106 M839.5 103V106 M846.5 90V106 M853.5 103V106 M859.5 103V106 M866.5 103V106 M873.5 103V106 M879.5 90V106 M886.5 103V106 M893.5 103V106 M899.5 103V106 M906.5 103V106 M913.5 90V106 M919.5 103V106 M926.5 103V106 M933.5 103V106 M939.5 103V106 M946.5 90V106 M953.5 103V106 M959.5 103V106 M966.5 103V106 M973.5 103V106 M979.5 90V106 M986.5 103V106 M993.5 103V106 M999.5 103V106 M1006.5 103V106 M1013.5 90V106 M1019.5 103V106 M1026.5 103V106 M1033.5 103V106 M1039.5 103V106 M1046.5 90V106 M1053.5 103V106 M1059.5 103V106 M1066.5 103V106 M1073.5 103V106 M1079.5 90V106 M1086.5 103V106 M1093.5 103V106 M1099.5 103V106 M1106.5 103V106 M1113.5 90V106 M1119.5 103V106 M1126.5 103V106 M1133.5 103V106 M1139.5 103V106 M1146.5 90V106 M1153.5 103V106 M1159.5 103V106 M1166.5 103V106 M1173.5 103V106 M1179.5 90V106 M1186.5 103V106 M1193.5 103V106 M1199.5 103V106 M1206.5 103V106 M1213.5 90V106 M1219.5 103V106 M1226.5 103V106 M1233.5 103V106 M1239.5 103V106 M1246.5 90V106 M1253.5 103V106 M1259.5 103V106 M1266.5 103V106 M1273.5 103V106 M1279.5 90V106 M1286.5 103V106 M1293.5 103V106 M1299.5 103V106 M1306.5 103V106 M1313.5 90V106 M1319.5 103V106 M1326.5 103V106 M1333.5 103V106 M1339.5 103V106 M1346.5 90V106 M1353.5 103V106 M1359.5 103V106 M1366.5 103V106 M1373.5 103V106 M1379.5 90V106 M1386.5 103V106 M1393.5 103V106 M1399.5 103V106 M1406.5 103V106 M1413.5 90V106 M1419.5 103V106 M1426.5 103V106 M1433.5 103V106 M1439.5 103V106 M1446.5 90V106 M1453.5 103V106 M1459.5 103V106 M1466.5 103V106 M1473.5 103V106 M1479.5 90V106 M1486.5 103V106 M1493.5 103V106 M1499.5 103V106 M1506.5 103V106 M1513.5 90V106 M1519.5 103V106 M1526.5 103V106 M1533.5 103V106 M1539.5 103V106 M1546.5 90V106 M1553.5 103V106 M1559.5 103V106 M1566.5 103V106 M1573.5 103V106 M1579.5 90V106 M1586.5 103V106 M1593.5 103V106 M1599.5 103V106 M1606.5 103V106 M1613.5 90V106 M1619.5 103V106 M1626.5 103V106 M1633.5 103V106 M1639.5 103V106 M1646.5 90V106 M1653.5 103V106 M1659.5 103V106 M1666.5 103V106 M1673.5 103V106 M1679.5 90V106 M1686.5 103V106 M1693.5 103V106 M1699.5 103V106 M1706.5 103V106 M1713.5 90V106 M1719.5 103V106 M1726.5 103V106 M1733.5 103V106 M1739.5 103V106 M1746.5 90V106 M1753.5 103V106 M1759.5 103V106 M1766.5 103V106 M1773.5 103V106 M1779.5 90V106 M1786.5 103V106 M1793.5 103V106 M1799.5 103V106 M1806.5 103V106 M1813.5 90V106 M1819.5 103V106 M1826.5 103V106 M1833.5 103V106 M1839.5 103V106 M1846.5 90V106 M1853.5 103V106 M1859.5 103V106" stroke="#000" stroke-width="1" fill="none"/><text x="48.2" y="100" font-size="9.7" textLength="15.5" lengthAdjust="spacingAndGlyphs" fill="#000">900</text><text x="81.2" y="100" font-size="9.7" textLength="15.5" lengthAdjust="spacingAndGlyphs" fill="#000">850</text><text x="115.2" y="100" font-size="9.7" textLength="15.5" lengthAdjust="spacingAndGlyphs" fill="#000">800</text><text x="148.2" y="100" font-size="9.7" textLength="15.5" lengthAdjust="spacingAndGlyphs" fill="#000">750</text><text x="181.2" y="100" font-size="9.7" textLength="15.5" lengthAdjust="spacingAndGlyphs" fill="#000">700</text><text x="215.2" y="100" font-size="9.7" textLength="15.5" lengthAdjust="spacingAndGlyphs" fill="#000">650</text><text x="248.2" y="100" font-size="9.7" textLength="15.5" lengthAdjust="spacingAndGlyphs" fill="#000">600</text><text x="281.2" y="100" font-size="9.7" textLength="15.5" lengthAdjust="spacingAndGlyphs" fill="#000">550</text><text x="315.2" y="100" font-size="9.7" textLength="15.5" lengthAdjust="spacingAndGlyphs" fill="#000">500</text><text x="348.2" y="100" font-size="9.7" textLength="15.5" lengthAdjust="spacingAndGlyphs" fill="#000">450</text><text x="381.2" y="100" font-size="9.7" textLength="15.5" lengthAdjust="spacingAndGlyphs" fill="#000">400</text><text x="415.2" y="100" font-size="9.7" textLength="15.5" lengthAdjust="spacingAndGlyphs" fill="#000">350</text><text x="448.2" y="100" font-size="9.7" textLength="15.5" lengthAdjust="spacingAndGlyphs" fill="#000">300</text><text x="481.2" y="100" font-size="9.7" textLength="15.5" lengthAdjust="spacingAndGlyphs" fill="#000">250</text><text x="515.2" y="100" font-size="9.7" textLength="15.5" lengthAdjust="spacingAndGlyphs" fill="#000">200</text><text x="548.2" y="100" font-size="9.7" textLength="15.5" lengthAdjust="spacingAndGlyphs" fill="#000">150</text><text x="581.2" y="100" font-size="9.7" textLength="15.5" lengthAdjust="spacingAndGlyphs" fill="#000">100</text><text x="615.2" y="100" font-size="9.7" textLength="10.3" lengthAdjust="spacingAndGlyphs" fill="#000">50</text><text x="648.2" y="100" font-size="9.7" textLength="5.2" lengthAdjust="spacingAndGlyphs" fill="#000">0</text><text x="681.2" y="100" font-size="9.7" textLength="10.3" lengthAdjust="spacingAndGlyphs" fill="#000">50</text><text x="715.2" y="100" font-size="9.7" textLength="15.5" lengthAdjust="spacingAndGlyphs" fill="#000">100</text><text x="748.2" y="100" font-size="9.7" textLength="15.5" lengthAdjust="spacingAndGlyphs" fill="#000">150</text><text x="781.2" y="100" font-size="9.7" textLength="15.5" lengthAdjust="spacingAndGlyphs" fill="#000">200</text><text x="815.2" y="100" font-size="9.7" textLength="15.5" lengthAdjust="spacingAndGlyphs" fill="#000">250</text><text x="848.2" y="100" font-size="9.7" textLength="15.5" lengthAdjust="spacingAndGlyphs" fill="#000">300</text><text x="881.2" y="100" font-size="9.7" textLength="15.5" lengthAdjust="spacingAndGlyphs" fill="#000">350</text><text x="915.2" y="100" font-size="9.7" textLength="15.5" lengthAdjust="spacingAndGlyphs" fill="#000">400</text><text x="948.2" y="100" font-size="9.7" textLength="15.5" lengthAdjust="spacingAndGlyphs" fill="#000">450</text><text x="981.2" y="100" font-size="9.7" textLength="15.5" lengthAdjust="spacingAndGlyphs" fill="#000">500</text><text x="1015.2" y="100" font-size="9.7" textLength="15.5" lengthAdjust="spacingAndGlyphs" fill="#000">550</text><text x="1048.2" y="100" font-size="9.7" textLength="15.5" lengthAdjust="spacingAndGlyphs" fill="#000">600</text><text x="1081.2" y="100" font-size="9.7" textLength="15.5" lengthAdjust="spacingAndGlyphs" fill="#000">650</text><text x="1115.2" y="100" font-size="9.7" textLength="15.5" lengthAdjust="spacingAndGlyphs" fill="#000">700</text><text x="1148.2" y="100" font-size="9.7" textLength="15.5" lengthAdjust="spacingAndGlyphs" fill="#000">750</text><text x="1181.2" y="100" font-size="9.7" textLength="15.5" lengthAdjust="spacingAndGlyphs" fill="#000">800</text><text x="1215.2" y="100" font-size="9.7" textLength="15.5" lengthAdjust="spacingAndGlyphs" fill="#000">850</text><text x="1248.2" y="100" font-size="9.7" textLength="15.5" lengthAdjust="spacingAndGlyphs" fill="#000">900</text><text x="1281.2" y="100" font-size="9.7" textLength="15.5" lengthAdjust="spacingAndGlyphs" fill="#000">950</text><text x="1315.2" y="100" font-size="9.7" textLength="20.6" lengthAdjust="spacingAndGlyphs" fill="#000">1000</text><text x="1348.2" y="100" font-size="9.7" textLength="20.6" lengthAdjust="spacingAndGlyphs" fill="#000">1050</text><text x="1381.2" y="100" font-size="9.7" textLength="20.6" lengthAdjust="spacingAndGlyphs" fill="#000">1100</text><text x="1415.2" y="100" font-size="9.7" textLength="20.6" lengthAdjust="spacingAndGlyphs" fill="#000">1150</text><text x="1448.2" y="100" font-size="9.7" textLength="20.6" lengthAdjust="spacingAndGlyphs" fill="#000">1200</text><text x="1481.2" y="100" font-size="9.7" textLength="20.6" lengthAdjust="spacingAndGlyphs" fill="#000">1250</text><text x="1515.2" y="100" font-size="9.7" textLength="20.6" lengthAdjust="spacingAndGlyphs" fill="#000">1300</text><text x="1548.2" y="100" font-size="9.7" textLength="20.6" lengthAdjust="spacingAndGlyphs" fill="#000">1350</text><text x="1581.2" y="100" font-size="9.7" textLength="20.6" lengthAdjust="spacingAndGlyphs" fill="#000">1400</text><text x="1615.2" y="100" font-size="9.7" textLength="20.6" lengthAdjust="spacingAndGlyphs" fill="#000">1450</text><text x="1648.2" y="100" font-size="9.7" textLength="20.6" lengthAdjust="spacingAndGlyphs" fill="#000">1500</text><text x="1681.2" y="100" font-size="9.7" textLength="20.6" lengthAdjust="spacingAndGlyphs" fill="#000">1550</text><text x="1715.2" y="100" font-size="9.7" textLength="20.6" lengthAdjust="spacingAndGlyphs" fill="#000">1600</text><text x="1748.2" y="100" font-size="9.7" textLength="20.6" lengthAdjust="spacingAndGlyphs" fill="#000">1650</text><text x="1781.2" y="100" font-size="9.7" textLength="20.6" lengthAdjust="spacingAndGlyphs" fill="#000">1700</text><text x="1815.2" y="100" font-size="9.7" textLength="20.6" lengthAdjust="spacingAndGlyphs" fill="#000">1750</text><text x="1848.2" y="100" font-size="9.7" textLength="20.6" lengthAdjust="spacingAndGlyphs" fill="#000">1800</text></svg></div>
<div style="left:59px;top:106px;width:1805px;height:1px;background:#000;"></div>
<div style="left:42px;top:107px;width:16px;height:897px;overflow:hidden;"><svg style="left:-42px;top:-107px" width="80" height="1080" viewBox="0 0 80 1080"><path d="M55 108.5H58 M55 114.5H58 M55 121.5H58 M42 128.5H58 M55 134.5H58 M55 141.5H58 M55 148.5H58 M55 154.5H58 M42 161.5H58 M55 168.5H58 M55 174.5H58 M55 181.5H58 M55 188.5H58 M42 194.5H58 M55 201.5H58 M55 208.5H58 M55 214.5H58 M55 221.5H58 M42 228.5H58 M55 234.5H58 M55 241.5H58 M55 248.5H58 M55 254.5H58 M42 261.5H58 M55 268.5H58 M55 274.5H58 M55 281.5H58 M55 288.5H58 M42 294.5H58 M55 301.5H58 M55 308.5H58 M55 314.5H58 M55 321.5H58 M42 328.5H58 M55 334.5H58 M55 341.5H58 M55 348.5H58 M55 354.5H58 M42 361.5H58 M55 368.5H58 M55 374.5H58 M55 381.5H58 M55 388.5H58 M42 394.5H58 M55 401.5H58 M55 408.5H58 M55 414.5H58 M55 421.5H58 M42 428.5H58 M55 434.5H58 M55 441.5H58 M55 448.5H58 M55 454.5H58 M42 461.5H58 M55 468.5H58 M55 474.5H58 M55 481.5H58 M55 488.5H58 M42 494.5H58 M55 501.5H58 M55 508.5H58 M55 514.5H58 M55 521.5H58 M42 528.5H58 M55 534.5H58 M55 541.5H58 M55 548.5H58 M55 554.5H58 M42 561.5H58 M55 568.5H58 M55 574.5H58 M55 581.5H58 M55 588.5H58 M42 594.5H58 M55 601.5H58 M55 608.5H58 M55 614.5H58 M55 621.5H58 M42 628.5H58 M55 634.5H58 M55 641.5H58 M55 648.5H58 M55 654.5H58 M42 661.5H58 M55 668.5H58 M55 674.5H58 M55 681.5H58 M55 688.5H58 M42 694.5H58 M55 701.5H58 M55 708.5H58 M55 714.5H58 M55 721.5H58 M42 728.5H58 M55 734.5H58 M55 741.5H58 M55 748.5H58 M55 754.5H58 M42 761.5H58 M55 768.5H58 M55 774.5H58 M55 781.5H58 M55 788.5H58 M42 794.5H58 M55 801.5H58 M55 808.5H58 M55 814.5H58 M55 821.5H58 M42 828.5H58 M55 834.5H58 M55 841.5H58 M55 848.5H58 M55 854.5H58 M42 861.5H58 M55 868.5H58 M55 874.5H58 M55 881.5H58 M55 888.5H58 M42 894.5H58 M55 901.5H58 M55 908.5H58 M55 914.5H58 M55 921.5H58 M42 928.5H58 M55 934.5H58 M55 941.5H58 M55 948.5H58 M55 954.5H58 M42 961.5H58 M55 968.5H58 M55 974.5H58 M55 981.5H58 M55 988.5H58 M42 994.5H58 M55 1001.5H58" stroke="#000" stroke-width="1" fill="none"/><text x="43.2" y="104.6" font-size="9.7" fill="#000">1</text><text x="43.2" y="114.8" font-size="9.7" fill="#000">0</text><text x="43.2" y="125.0" font-size="9.7" fill="#000">0</text><text x="43.2" y="138.6" font-size="9.7" fill="#000">5</text><text x="43.2" y="148.8" font-size="9.7" fill="#000">0</text><text x="43.2" y="171.6" font-size="9.7" fill="#000">0</text><text x="43.2" y="204.6" font-size="9.7" fill="#000">5</text><text x="43.2" y="214.8" font-size="9.7" fill="#000">0</text><text x="43.2" y="238.6" font-size="9.7" fill="#000">1</text><text x="43.2" y="248.8" font-size="9.7" fill="#000">0</text><text x="43.2" y="259.0" font-size="9.7" fill="#000">0</text><text x="43.2" y="271.6" font-size="9.7" fill="#000">1</text><text x="43.2" y="281.8" font-size="9.7" fill="#000">5</text><text x="43.2" y="292.0" font-size="9.7" fill="#000">0</text><text x="43.2" y="304.6" font-size="9.7" fill="#000">2</text><text x="43.2" y="314.8" font-size="9.7" fill="#000">0</text><text x="43.2" y="325.0" font-size="9.7" fill="#000">0</text><text x="43.2" y="338.6" font-size="9.7" fill="#000">2</text><text x="43.2" y="348.8" font-size="9.7" fill="#000">5</text><text x="43.2" y="359.0" font-size="9.7" fill="#000">0</text><text x="43.2" y="371.6" font-size="9.7" fill="#000">3</text><text x="43.2" y="381.8" font-size="9.7" fill="#000">0</text><text x="43.2" y="392.0" font-size="9.7" fill="#000">0</text><text x="43.2" y="404.6" font-size="9.7" fill="#000">3</text><text x="43.2" y="414.8" font-size="9.7" fill="#000">5</text><text x="43.2" y="425.0" font-size="9.7" fill="#000">0</text><text x="43.2" y="438.6" font-size="9.7" fill="#000">4</text><text x="43.2" y="448.8" font-size="9.7" fill="#000">0</text><text x="43.2" y="459.0" font-size="9.7" fill="#000">0</text><text x="43.2" y="471.6" font-size="9.7" fill="#000">4</text><text x="43.2" y="481.8" font-size="9.7" fill="#000">5</text><text x="43.2" y="492.0" font-size="9.7" fill="#000">0</text><text x="43.2" y="504.6" font-size="9.7" fill="#000">5</text><text x="43.2" y="514.8" font-size="9.7" fill="#000">0</text><text x="43.2" y="525.0" font-size="9.7" fill="#000">0</text><text x="43.2" y="538.6" font-size="9.7" fill="#000">5</text><text x="43.2" y="548.8" font-size="9.7" fill="#000">5</text><text x="43.2" y="559.0" font-size="9.7" fill="#000">0</text><text x="43.2" y="571.6" font-size="9.7" fill="#000">6</text><text x="43.2" y="581.8" font-size="9.7" fill="#000">0</text><text x="43.2" y="592.0" font-size="9.7" fill="#000">0</text><text x="43.2" y="604.6" font-size="9.7" fill="#000">6</text><text x="43.2" y="614.8" font-size="9.7" fill="#000">5</text><text x="43.2" y="625.0" font-size="9.7" fill="#000">0</text><text x="43.2" y="638.6" font-size="9.7" fill="#000">7</text><text x="43.2" y="648.8" font-size="9.7" fill="#000">0</text><text x="43.2" y="659.0" font-size="9.7" fill="#000">0</text><text x="43.2" y="671.6" font-size="9.7" fill="#000">7</text><text x="43.2" y="681.8" font-size="9.7" fill="#000">5</text><text x="43.2" y="692.0" font-size="9.7" fill="#000">0</text><text x="43.2" y="704.6" font-size="9.7" fill="#000">8</text><text x="43.2" y="714.8" font-size="9.7" fill="#000">0</text><text x="43.2" y="725.0" font-size="9.7" fill="#000">0</text><text x="43.2" y="738.6" font-size="9.7" fill="#000">8</text><text x="43.2" y="748.8" font-size="9.7" fill="#000">5</text><text x="43.2" y="759.0" font-size="9.7" fill="#000">0</text><text x="43.2" y="771.6" font-size="9.7" fill="#000">9</text><text x="43.2" y="781.8" font-size="9.7" fill="#000">0</text><text x="43.2" y="792.0" font-size="9.7" fill="#000">0</text><text x="43.2" y="804.6" font-size="9.7" fill="#000">9</text><text x="43.2" y="814.8" font-size="9.7" fill="#000">5</text><text x="43.2" y="825.0" font-size="9.7" fill="#000">0</text><text x="43.2" y="838.6" font-size="9.7" fill="#000">1</text><text x="43.2" y="848.8" font-size="9.7" fill="#000">0</text><text x="43.2" y="859.0" font-size="9.7" fill="#000">0</text><text x="43.2" y="869.2" font-size="9.7" fill="#000">0</text><text x="43.2" y="871.6" font-size="9.7" fill="#000">1</text><text x="43.2" y="881.8" font-size="9.7" fill="#000">0</text><text x="43.2" y="892.0" font-size="9.7" fill="#000">5</text><text x="43.2" y="902.2" font-size="9.7" fill="#000">0</text><text x="43.2" y="904.6" font-size="9.7" fill="#000">1</text><text x="43.2" y="914.8" font-size="9.7" fill="#000">1</text><text x="43.2" y="925.0" font-size="9.7" fill="#000">0</text><text x="43.2" y="935.2" font-size="9.7" fill="#000">0</text><text x="43.2" y="938.6" font-size="9.7" fill="#000">1</text><text x="43.2" y="948.8" font-size="9.7" fill="#000">1</text><text x="43.2" y="959.0" font-size="9.7" fill="#000">5</text><text x="43.2" y="969.2" font-size="9.7" fill="#000">0</text><text x="43.2" y="971.6" font-size="9.7" fill="#000">1</text><text x="43.2" y="981.8" font-size="9.7" fill="#000">2</text><text x="43.2" y="992.0" font-size="9.7" fill="#000">0</text><text x="43.2" y="1002.2" font-size="9.7" fill="#000">0</text><text x="43.2" y="1004.6" font-size="9.7" fill="#000">1</text><text x="43.2" y="1014.8" font-size="9.7" fill="#000">2</text><text x="43.2" y="1025.0" font-size="9.7" fill="#000">5</text><text x="43.2" y="1035.2" font-size="9.7" fill="#000">0</text></svg></div>
<div style="left:58px;top:106px;width:1px;height:898px;background:#000;"></div>
<div style="left:42px;top:106px;width:16px;height:1px;background:#b0b0b0;"></div>
<div style="left:1864px;top:90px;width:15px;height:914px;background:#f0f0f0;"></div>
<svg style="left:1866.5px;top:101px;" width="10" height="7" viewBox="0 0 10 7"><path d="M1 6L5 1.5L9 6" fill="none" stroke="#d0d0d0" stroke-width="1.6"/></svg>
<svg style="left:1866.5px;top:988px;" width="10" height="7" viewBox="0 0 10 7"><path d="M1 1L5 5.5L9 1" fill="none" stroke="#b8b8b8" stroke-width="1.6"/></svg>
<div style="left:1864px;top:1004px;width:15px;height:15px;background:#dadada;"></div>
<div style="left:41px;top:1004px;width:1823px;height:15px;background:#f0f0f0;"></div>
<div style="left:41px;top:1004px;width:256px;height:15px;background:#d2d2d2;"></div>
<div style="left:41px;top:1004px;width:256px;height:1px;background:#8a8a8a;"></div>
<div style="left:41px;top:1005px;width:48px;height:14px;background:#fff;border-right:1px solid #8a8a8a;"></div>
<span class="t" style="left:46.72px;top:1008.00px;font-size:11.5px;line-height:11.5px;color:#000;transform:scaleX(1.0382);">66,67%</span>
<div style="left:89px;top:1005px;width:23px;height:14px;background:#d2d2d2;border-right:1px solid #8a8a8a;"></div>
<svg style="left:94px;top:1005.5px;" width="13" height="13" viewBox="0 0 13 13"><circle cx="6.5" cy="6.5" r="5.6" fill="#dcdcdc" stroke="#777" stroke-width="1"/><path d="M4.5 3.5H7.5L9.5 5.5V9.5H4.5Z" fill="#eee" stroke="#666" stroke-width="0.9"/></svg>
<span class="t" style="left:150.26px;top:1008.00px;font-size:11px;line-height:11px;color:#111;transform:scaleX(1.0350);">Док: 3,19M/3,19M</span>
<div style="left:283px;top:1005px;width:1px;height:14px;background:#8a8a8a;"></div>
<svg style="left:286px;top:1007px;" width="8" height="10" viewBox="0 0 8 10"><path d="M0.5 0L6.5 5L0.5 10Z" fill="#000"/></svg>
<div style="left:296px;top:1004px;width:1px;height:15px;background:#8a8a8a;"></div>
<svg style="left:305px;top:1007px;" width="8" height="10" viewBox="0 0 8 10"><path d="M6 1L1.5 5L6 9" fill="none" stroke="#b0b0b0" stroke-width="1.6"/></svg>
<svg style="left:1847px;top:1007px;" width="8" height="10" viewBox="0 0 8 10"><path d="M1.5 1L6 5L1.5 9" fill="none" stroke="#b0b0b0" stroke-width="1.6"/></svg>
<svg style="left:0;top:0" width="1920" height="1080" viewBox="0 0 1920 1080"><defs><radialGradient id="hg" cx="925" cy="300" r="230" gradientUnits="userSpaceOnUse"><stop offset="0" stop-color="#57504a"/><stop offset="0.45" stop-color="#787068"/><stop offset="0.8" stop-color="#91887e"/><stop offset="1" stop-color="#a39a90"/></radialGradient><linearGradient id="sk" x1="0" y1="742" x2="0" y2="948" gradientUnits="userSpaceOnUse"><stop offset="0" stop-color="#d0a692"/><stop offset="0.25" stop-color="#d9b29d"/><stop offset="0.5" stop-color="#e4c1ab"/><stop offset="1" stop-color="#e8c8b3"/></linearGradient><linearGradient id="jk" x1="0" y1="0" x2="1" y2="0"><stop offset="0" stop-color="#12141b"/><stop offset="0.5" stop-color="#1a1d27"/><stop offset="1" stop-color="#12141b"/></linearGradient><filter id="bl" x="-5%" y="-5%" width="110%" height="110%"><feGaussianBlur stdDeviation="1.2"/></filter><filter id="bl3" x="-10%" y="-10%" width="120%" height="120%"><feGaussianBlur stdDeviation="5"/></filter><clipPath id="pc"><rect x="646" y="161" width="630" height="788"/></clipPath></defs><rect x="646" y="161" width="630" height="788" fill="#fff"/><g clip-path="url(#pc)"><path d="M756 400 C756.0 395.3 755.9 378.8 756 372 C756.1 365.2 756.0 364.1 756.5 359 C757.0 353.9 757.6 347.7 759 341.7 C760.4 335.7 762.2 329.4 765 322.8 C767.8 316.2 771.8 309.2 776 302.4 C780.2 295.6 785.1 288.6 790.4 282 C795.7 275.4 801.4 269.3 807.7 263 C814.0 256.7 821.0 249.2 828 244 C835.0 238.8 842.4 235.7 850 231.5 C857.6 227.3 865.6 222.2 873.9 218.9 C882.2 215.6 891.5 213.6 900 211.8 C908.5 210.0 916.7 209.0 925 208.3 C933.3 207.6 941.7 207.6 950 207.8 C958.3 208.0 966.7 208.5 975 209.3 C983.3 210.1 990.6 210.7 1000 212.6 C1009.4 214.5 1021.0 216.6 1031.5 220.5 C1042.0 224.4 1053.6 230.0 1063 236 C1072.4 242.0 1080.7 249.6 1088 256.7 C1095.3 263.8 1101.5 271.1 1107 278.7 C1112.5 286.2 1117.3 294.1 1121 302 C1124.7 309.9 1127.2 319.3 1129 326 C1130.8 332.7 1131.0 336.5 1131.5 342 C1132.0 347.5 1131.9 354.0 1132 359 C1132.1 364.0 1132.0 365.2 1132 372 C1132.0 378.8 1132.0 395.3 1132 400 L1132 742 L1090 742 L1090 700 L800 700 L800 742 L797 742 L757 560 Z" fill="url(#hg)" filter="url(#bl)"/><mask id="hc" maskUnits="userSpaceOnUse" x="646" y="161" width="630" height="788"><path d="M756 400 C756.0 395.3 755.9 378.8 756 372 C756.1 365.2 756.0 364.1 756.5 359 C757.0 353.9 757.6 347.7 759 341.7 C760.4 335.7 762.2 329.4 765 322.8 C767.8 316.2 771.8 309.2 776 302.4 C780.2 295.6 785.1 288.6 790.4 282 C795.7 275.4 801.4 269.3 807.7 263 C814.0 256.7 821.0 249.2 828 244 C835.0 238.8 842.4 235.7 850 231.5 C857.6 227.3 865.6 222.2 873.9 218.9 C882.2 215.6 891.5 213.6 900 211.8 C908.5 210.0 916.7 209.0 925 208.3 C933.3 207.6 941.7 207.6 950 207.8 C958.3 208.0 966.7 208.5 975 209.3 C983.3 210.1 990.6 210.7 1000 212.6 C1009.4 214.5 1021.0 216.6 1031.5 220.5 C1042.0 224.4 1053.6 230.0 1063 236 C1072.4 242.0 1080.7 249.6 1088 256.7 C1095.3 263.8 1101.5 271.1 1107 278.7 C1112.5 286.2 1117.3 294.1 1121 302 C1124.7 309.9 1127.2 319.3 1129 326 C1130.8 332.7 1131.0 336.5 1131.5 342 C1132.0 347.5 1131.9 354.0 1132 359 C1132.1 364.0 1132.0 365.2 1132 372 C1132.0 378.8 1132.0 395.3 1132 400 L1132 742 L1090 742 L1090 700 L800 700 L800 742 L797 742 L757 560 Z" fill="#fff" filter="url(#bl)"/></mask><g mask="url(#hc)"><path d="M1040 230 C1100 270 1135 330 1130 380 L1060 380 C1075 330 1070 280 1040 230Z" fill="#b3a08e" opacity="0.7" filter="url(#bl3)"/><path d="M800 262 C770 300 756 340 756 380 L810 380 C805 340 810 300 830 262Z" fill="#a0968b" opacity="0.5" filter="url(#bl3)"/><path d="M908 300 L886 385 L1000 385 L962 332 Z" fill="#cc9e8b" filter="url(#bl3)"/><path d="M905 325 L893 385 L960 385 L935 340 Z" fill="#d6a894" filter="url(#bl)" opacity="0.9"/><path d="M862 222 C900 205 980 202 1030 218 C1060 230 1080 250 1090 268 C1050 262 1000 262 960 270 C930 262 890 250 862 222Z" fill="#3d3631" opacity="0.55" filter="url(#bl3)"/><ellipse cx="965" cy="262" rx="70" ry="36" transform="rotate(25 965 262)" fill="#3a342f" opacity="0.75" filter="url(#bl3)"/><ellipse cx="890" cy="250" rx="30" ry="22" fill="#433c36" opacity="0.6" filter="url(#bl3)"/><g fill="none" stroke-linecap="round"><path d="M879 208Q832 236 838 378" stroke="#786f65" stroke-width="0.9" opacity="0.86"/><path d="M871 207Q806 235 806 378" stroke="#47403b" stroke-width="2.4" opacity="0.51"/><path d="M872 217Q889 240 878 378" stroke="#cbc5bd" stroke-width="0.9" opacity="0.70"/><path d="M865 213Q834 242 823 378" stroke="#998f84" stroke-width="0.9" opacity="0.71"/><path d="M903 212Q818 222 824 378" stroke="#686057" stroke-width="3.2" opacity="0.69"/><path d="M913 214Q879 231 875 378" stroke="#686057" stroke-width="1.1" opacity="0.49"/><path d="M878 214Q803 245 796 378" stroke="#59514a" stroke-width="2.4" opacity="0.64"/><path d="M912 208Q809 241 816 378" stroke="#998f84" stroke-width="2.4" opacity="0.81"/><path d="M916 211Q806 249 797 378" stroke="#59514a" stroke-width="0.9" opacity="0.88"/><path d="M891 218Q773 250 758 378" stroke="#dedad4" stroke-width="1.8" opacity="0.58"/><path d="M884 218Q760 232 753 378" stroke="#59514a" stroke-width="0.9" opacity="0.55"/><path d="M877 219Q826 245 804 378" stroke="#686057" stroke-width="1.8" opacity="0.70"/><path d="M921 221Q868 244 867 378" stroke="#786f65" stroke-width="1.8" opacity="0.88"/><path d="M866 208Q781 234 781 378" stroke="#897f74" stroke-width="1.4" opacity="0.58"/><path d="M866 215Q835 228 832 378" stroke="#a89f95" stroke-width="2.4" opacity="0.74"/><path d="M910 214Q891 247 868 378" stroke="#897f74" stroke-width="1.8" opacity="0.63"/><path d="M863 217Q753 233 758 378" stroke="#686057" stroke-width="1.4" opacity="0.72"/><path d="M863 216Q846 246 822 378" stroke="#59514a" stroke-width="1.1" opacity="0.73"/><path d="M866 210Q801 222 797 378" stroke="#a89f95" stroke-width="1.8" opacity="0.67"/><path d="M878 208Q868 233 851 378" stroke="#998f84" stroke-width="2.4" opacity="0.46"/><path d="M926 215Q780 224 770 378" stroke="#897f74" stroke-width="3.2" opacity="0.84"/><path d="M907 210Q797 247 800 378" stroke="#897f74" stroke-width="2.4" opacity="0.60"/><path d="M872 220Q903 258 883 378" stroke="#a89f95" stroke-width="3.2" opacity="0.81"/><path d="M870 214Q873 252 849 378" stroke="#897f74" stroke-width="1.1" opacity="0.76"/><path d="M927 213Q901 257 876 378" stroke="#786f65" stroke-width="1.1" opacity="0.50"/><path d="M890 211Q840 242 815 378" stroke="#47403b" stroke-width="3.2" opacity="0.60"/><path d="M903 221Q771 255 766 378" stroke="#686057" stroke-width="1.1" opacity="0.65"/><path d="M903 207Q894 232 878 378" stroke="#998f84" stroke-width="0.9" opacity="0.78"/><path d="M868 207Q792 245 770 378" stroke="#59514a" stroke-width="2.4" opacity="0.89"/><path d="M904 212Q820 220 824 378" stroke="#cbc5bd" stroke-width="3.2" opacity="0.50"/><path d="M911 208Q882 248 883 378" stroke="#47403b" stroke-width="1.1" opacity="0.58"/><path d="M873 216Q791 229 785 378" stroke="#b9b1a8" stroke-width="1.4" opacity="0.85"/><path d="M905 220Q839 261 820 378" stroke="#59514a" stroke-width="1.1" opacity="0.69"/><path d="M856 213Q767 251 775 378" stroke="#686057" stroke-width="1.8" opacity="0.73"/><path d="M864 206Q852 232 842 378" stroke="#998f84" stroke-width="2.4" opacity="0.48"/><path d="M869 206Q770 215 763 378" stroke="#a89f95" stroke-width="0.9" opacity="0.65"/><path d="M901 215Q834 239 819 378" stroke="#897f74" stroke-width="1.8" opacity="0.68"/><path d="M874 215Q891 257 868 378" stroke="#a89f95" stroke-width="1.1" opacity="0.83"/><path d="M865 207Q804 224 810 378" stroke="#59514a" stroke-width="3.2" opacity="0.59"/><path d="M864 220Q890 241 877 378" stroke="#686057" stroke-width="1.1" opacity="0.89"/><path d="M871 223Q812 268 804 378" stroke="#a89f95" stroke-width="1.1" opacity="0.77"/><path d="M930 213Q811 224 807 378" stroke="#786f65" stroke-width="1.4" opacity="0.70"/><path d="M888 205Q807 232 795 378" stroke="#59514a" stroke-width="1.1" opacity="0.89"/><path d="M863 210Q773 228 755 378" stroke="#59514a" stroke-width="1.8" opacity="0.83"/><path d="M906 223Q815 250 805 378" stroke="#897f74" stroke-width="1.4" opacity="0.49"/><path d="M859 218Q802 261 807 378" stroke="#998f84" stroke-width="1.4" opacity="0.49"/><path d="M919 206Q873 227 866 378" stroke="#897f74" stroke-width="1.4" opacity="0.73"/><path d="M858 218Q901 236 877 378" stroke="#686057" stroke-width="1.4" opacity="0.73"/><path d="M895 209Q824 227 810 378" stroke="#a89f95" stroke-width="1.4" opacity="0.47"/><path d="M856 215Q891 232 882 378" stroke="#786f65" stroke-width="3.2" opacity="0.82"/><path d="M887 214Q868 241 863 378" stroke="#998f84" stroke-width="1.1" opacity="0.60"/><path d="M917 218Q841 239 836 378" stroke="#47403b" stroke-width="1.1" opacity="0.46"/><path d="M902 222Q802 254 808 378" stroke="#786f65" stroke-width="2.4" opacity="0.75"/><path d="M876 210Q797 223 790 378" stroke="#786f65" stroke-width="1.4" opacity="0.61"/><path d="M880 224Q787 264 794 378" stroke="#686057" stroke-width="1.1" opacity="0.45"/><path d="M884 214Q817 241 818 378" stroke="#47403b" stroke-width="1.4" opacity="0.82"/><path d="M866 216Q805 247 803 378" stroke="#59514a" stroke-width="2.4" opacity="0.83"/><path d="M867 222Q868 258 856 378" stroke="#998f84" stroke-width="1.8" opacity="0.52"/><path d="M909 217Q775 258 756 378" stroke="#998f84" stroke-width="3.2" opacity="0.77"/><path d="M893 222Q862 260 852 378" stroke="#47403b" stroke-width="3.2" opacity="0.71"/><path d="M922 218Q843 227 844 378" stroke="#59514a" stroke-width="1.4" opacity="0.88"/><path d="M883 214Q749 241 757 378" stroke="#686057" stroke-width="1.4" opacity="0.45"/><path d="M915 219Q828 252 818 378" stroke="#59514a" stroke-width="3.2" opacity="0.66"/><path d="M916 221Q799 238 782 378" stroke="#998f84" stroke-width="1.8" opacity="0.67"/><path d="M884 214Q860 245 842 378" stroke="#998f84" stroke-width="0.9" opacity="0.72"/><path d="M880 217Q856 230 844 378" stroke="#897f74" stroke-width="1.8" opacity="0.57"/><path d="M905 218Q843 245 841 378" stroke="#897f74" stroke-width="1.8" opacity="0.80"/><path d="M929 215Q787 241 792 378" stroke="#686057" stroke-width="0.9" opacity="0.82"/><path d="M928 214Q785 257 786 378" stroke="#686057" stroke-width="2.4" opacity="0.49"/><path d="M911 210Q810 241 799 378" stroke="#686057" stroke-width="0.9" opacity="0.77"/><path d="M872 222Q808 230 816 378" stroke="#897f74" stroke-width="1.8" opacity="0.63"/><path d="M910 213Q797 233 801 378" stroke="#786f65" stroke-width="1.4" opacity="0.83"/><path d="M864 223Q868 241 846 378" stroke="#786f65" stroke-width="1.8" opacity="0.63"/><path d="M920 206Q892 246 875 378" stroke="#686057" stroke-width="0.9" opacity="0.83"/><path d="M876 223Q784 250 784 378" stroke="#686057" stroke-width="1.4" opacity="0.80"/><path d="M887 206Q858 246 853 378" stroke="#897f74" stroke-width="1.1" opacity="0.77"/><path d="M859 219Q828 251 811 378" stroke="#686057" stroke-width="0.9" opacity="0.86"/><path d="M896 208Q807 226 806 378" stroke="#998f84" stroke-width="3.2" opacity="0.57"/><path d="M904 211Q830 225 825 378" stroke="#686057" stroke-width="1.1" opacity="0.68"/><path d="M916 215Q814 252 811 378" stroke="#786f65" stroke-width="2.4" opacity="0.54"/><path d="M862 211Q762 229 762 378" stroke="#897f74" stroke-width="0.9" opacity="0.79"/><path d="M886 213Q825 233 821 378" stroke="#59514a" stroke-width="1.4" opacity="0.71"/><path d="M882 218Q840 257 821 378" stroke="#59514a" stroke-width="1.1" opacity="0.62"/><path d="M903 213Q811 257 792 378" stroke="#59514a" stroke-width="1.8" opacity="0.77"/><path d="M922 214Q821 236 829 378" stroke="#b9b1a8" stroke-width="2.4" opacity="0.83"/><path d="M928 210Q762 237 765 378" stroke="#998f84" stroke-width="3.2" opacity="0.77"/><path d="M918 222Q779 230 761 378" stroke="#59514a" stroke-width="2.4" opacity="0.86"/><path d="M903 211Q768 242 767 378" stroke="#998f84" stroke-width="0.9" opacity="0.49"/><path d="M878 223Q776 260 776 378" stroke="#47403b" stroke-width="2.4" opacity="0.59"/><path d="M890 223Q858 249 837 378" stroke="#686057" stroke-width="1.1" opacity="0.46"/><path d="M886 217Q756 258 757 378" stroke="#998f84" stroke-width="0.9" opacity="0.57"/><path d="M905 223Q774 243 781 378" stroke="#786f65" stroke-width="3.2" opacity="0.63"/><path d="M856 211Q858 237 864 378" stroke="#686057" stroke-width="1.1" opacity="0.55"/><path d="M872 219Q813 246 790 378" stroke="#686057" stroke-width="1.1" opacity="0.67"/><path d="M923 206Q853 216 830 378" stroke="#47403b" stroke-width="2.4" opacity="0.51"/><path d="M856 205Q1038 254 1035 378" stroke="#998f84" stroke-width="0.9" opacity="0.87"/><path d="M888 208Q1128 210 1131 378" stroke="#998f84" stroke-width="1.8" opacity="0.83"/><path d="M963 215Q953 219 984 378" stroke="#786f65" stroke-width="0.9" opacity="0.70"/><path d="M937 213Q1079 257 1101 378" stroke="#59514a" stroke-width="3.2" opacity="0.66"/><path d="M893 226Q980 275 999 378" stroke="#47403b" stroke-width="1.8" opacity="0.56"/><path d="M922 214Q1016 258 1031 378" stroke="#59514a" stroke-width="1.1" opacity="0.79"/><path d="M953 212Q1019 246 1013 378" stroke="#686057" stroke-width="3.2" opacity="0.76"/><path d="M956 211Q1083 255 1093 378" stroke="#b9b1a8" stroke-width="0.9" opacity="0.46"/><path d="M877 215Q1140 237 1134 378" stroke="#686057" stroke-width="1.8" opacity="0.82"/><path d="M865 216Q972 233 967 378" stroke="#998f84" stroke-width="1.1" opacity="0.72"/><path d="M888 212Q1028 216 1029 378" stroke="#686057" stroke-width="1.1" opacity="0.56"/><path d="M857 205Q1042 259 1063 378" stroke="#a89f95" stroke-width="0.9" opacity="0.57"/><path d="M860 206Q1049 231 1053 378" stroke="#686057" stroke-width="1.8" opacity="0.66"/><path d="M952 210Q1059 251 1060 378" stroke="#998f84" stroke-width="1.4" opacity="0.58"/><path d="M915 213Q1069 227 1096 378" stroke="#686057" stroke-width="1.1" opacity="0.58"/><path d="M954 209Q952 222 976 378" stroke="#897f74" stroke-width="3.2" opacity="0.81"/><path d="M925 228Q969 273 983 378" stroke="#a89f95" stroke-width="1.4" opacity="0.47"/><path d="M884 207Q1005 239 999 378" stroke="#b9b1a8" stroke-width="1.4" opacity="0.68"/><path d="M870 218Q1096 219 1102 378" stroke="#998f84" stroke-width="3.2" opacity="0.73"/><path d="M875 213Q964 227 990 378" stroke="#897f74" stroke-width="3.2" opacity="0.86"/><path d="M944 224Q1018 258 1037 378" stroke="#59514a" stroke-width="0.9" opacity="0.81"/><path d="M913 206Q965 236 983 378" stroke="#998f84" stroke-width="0.9" opacity="0.74"/><path d="M896 211Q1134 233 1140 378" stroke="#47403b" stroke-width="3.2" opacity="0.70"/><path d="M891 214Q1126 234 1118 378" stroke="#686057" stroke-width="3.2" opacity="0.63"/><path d="M958 214Q963 219 993 378" stroke="#897f74" stroke-width="1.4" opacity="0.66"/><path d="M869 204Q1055 254 1063 378" stroke="#59514a" stroke-width="2.4" opacity="0.87"/><path d="M935 208Q999 218 1027 378" stroke="#59514a" stroke-width="1.8" opacity="0.67"/><path d="M943 227Q970 279 1000 378" stroke="#cbc5bd" stroke-width="1.8" opacity="0.59"/><path d="M920 219Q976 257 980 378" stroke="#a89f95" stroke-width="3.2" opacity="0.80"/><path d="M876 214Q1115 224 1115 378" stroke="#686057" stroke-width="1.8" opacity="0.87"/><path d="M868 213Q998 257 991 378" stroke="#686057" stroke-width="2.4" opacity="0.83"/><path d="M927 220Q1004 245 1022 378" stroke="#a89f95" stroke-width="1.4" opacity="0.74"/><path d="M885 210Q1015 238 1034 378" stroke="#686057" stroke-width="0.9" opacity="0.73"/><path d="M906 210Q1099 235 1100 378" stroke="#686057" stroke-width="1.8" opacity="0.63"/><path d="M858 213Q1029 240 1030 378" stroke="#998f84" stroke-width="0.9" opacity="0.74"/><path d="M859 222Q1090 225 1103 378" stroke="#897f74" stroke-width="1.8" opacity="0.74"/><path d="M940 205Q968 243 977 378" stroke="#59514a" stroke-width="1.1" opacity="0.89"/><path d="M907 227Q1099 270 1127 378" stroke="#b9b1a8" stroke-width="0.9" opacity="0.82"/><path d="M920 210Q1014 260 1022 378" stroke="#786f65" stroke-width="1.4" opacity="0.68"/><path d="M956 209Q998 227 1012 378" stroke="#47403b" stroke-width="1.1" opacity="0.63"/><path d="M923 211Q1004 254 1023 378" stroke="#686057" stroke-width="2.4" opacity="0.47"/><path d="M949 227Q1033 265 1045 378" stroke="#a89f95" stroke-width="1.4" opacity="0.90"/><path d="M922 213Q1083 268 1106 378" stroke="#897f74" stroke-width="1.4" opacity="0.60"/><path d="M859 210Q1080 226 1074 378" stroke="#897f74" stroke-width="1.4" opacity="0.74"/><path d="M963 218Q1061 218 1082 378" stroke="#47403b" stroke-width="1.1" opacity="0.58"/><path d="M922 214Q996 241 1029 378" stroke="#897f74" stroke-width="0.9" opacity="0.46"/><path d="M850 213Q964 225 984 378" stroke="#897f74" stroke-width="2.4" opacity="0.51"/><path d="M892 224Q959 268 993 378" stroke="#998f84" stroke-width="1.8" opacity="0.49"/><path d="M923 225Q1086 239 1103 378" stroke="#47403b" stroke-width="3.2" opacity="0.82"/><path d="M953 218Q1058 247 1067 378" stroke="#897f74" stroke-width="1.1" opacity="0.86"/><path d="M855 217Q1012 220 1037 378" stroke="#998f84" stroke-width="0.9" opacity="0.73"/><path d="M926 209Q1025 244 1038 378" stroke="#998f84" stroke-width="1.8" opacity="0.82"/><path d="M870 211Q985 260 1018 378" stroke="#998f84" stroke-width="3.2" opacity="0.69"/><path d="M893 214Q1095 251 1126 378" stroke="#686057" stroke-width="0.9" opacity="0.57"/><path d="M924 207Q1128 259 1123 378" stroke="#686057" stroke-width="0.9" opacity="0.57"/><path d="M914 214Q1092 229 1105 378" stroke="#998f84" stroke-width="1.1" opacity="0.49"/><path d="M908 208Q1126 219 1125 378" stroke="#59514a" stroke-width="1.4" opacity="0.54"/><path d="M895 218Q1034 269 1032 378" stroke="#cbc5bd" stroke-width="2.4" opacity="0.66"/><path d="M947 221Q1101 261 1117 378" stroke="#897f74" stroke-width="1.4" opacity="0.81"/><path d="M895 218Q1037 220 1065 378" stroke="#59514a" stroke-width="2.4" opacity="0.87"/><path d="M890 207Q937 245 970 378" stroke="#998f84" stroke-width="3.2" opacity="0.48"/><path d="M855 225Q1073 277 1100 378" stroke="#897f74" stroke-width="3.2" opacity="0.48"/><path d="M950 226Q1102 237 1132 378" stroke="#59514a" stroke-width="0.9" opacity="0.88"/><path d="M955 222Q978 257 980 378" stroke="#897f74" stroke-width="1.1" opacity="0.49"/><path d="M937 209Q1005 210 1021 378" stroke="#686057" stroke-width="1.4" opacity="0.47"/><path d="M937 226Q1092 252 1101 378" stroke="#686057" stroke-width="3.2" opacity="0.46"/><path d="M897 214Q1082 253 1102 378" stroke="#897f74" stroke-width="1.1" opacity="0.77"/><path d="M945 218Q1000 247 1016 378" stroke="#686057" stroke-width="0.9" opacity="0.45"/><path d="M906 216Q1079 243 1106 378" stroke="#786f65" stroke-width="2.4" opacity="0.57"/><path d="M959 211Q998 238 1003 378" stroke="#59514a" stroke-width="3.2" opacity="0.80"/><path d="M906 228Q1034 246 1064 378" stroke="#59514a" stroke-width="1.8" opacity="0.85"/><path d="M936 214Q1060 231 1079 378" stroke="#786f65" stroke-width="2.4" opacity="0.68"/><path d="M894 225Q991 254 1006 378" stroke="#998f84" stroke-width="2.4" opacity="0.74"/><path d="M890 212Q994 248 992 378" stroke="#998f84" stroke-width="1.1" opacity="0.66"/><path d="M929 210Q985 246 1006 378" stroke="#998f84" stroke-width="2.4" opacity="0.54"/><path d="M885 221Q1086 229 1114 378" stroke="#686057" stroke-width="1.4" opacity="0.72"/><path d="M890 210Q1110 262 1134 378" stroke="#dedad4" stroke-width="1.1" opacity="0.88"/><path d="M862 213Q1138 254 1139 378" stroke="#786f65" stroke-width="1.1" opacity="0.50"/><path d="M955 211Q1107 211 1122 378" stroke="#a89f95" stroke-width="1.8" opacity="0.76"/><path d="M908 219Q1018 252 1047 378" stroke="#786f65" stroke-width="3.2" opacity="0.56"/><path d="M948 221Q1062 267 1069 378" stroke="#998f84" stroke-width="3.2" opacity="0.85"/><path d="M939 221Q1110 256 1116 378" stroke="#786f65" stroke-width="1.4" opacity="0.57"/><path d="M931 225Q990 265 1008 378" stroke="#59514a" stroke-width="1.8" opacity="0.67"/><path d="M852 225Q1050 273 1057 378" stroke="#a89f95" stroke-width="1.4" opacity="0.80"/><path d="M895 216Q1104 246 1138 378" stroke="#59514a" stroke-width="1.1" opacity="0.68"/><path d="M862 218Q1057 246 1061 378" stroke="#998f84" stroke-width="1.4" opacity="0.68"/><path d="M897 227Q997 248 1002 378" stroke="#998f84" stroke-width="0.9" opacity="0.78"/><path d="M921 219Q991 223 1010 378" stroke="#59514a" stroke-width="1.8" opacity="0.73"/><path d="M928 218Q962 240 984 378" stroke="#b9b1a8" stroke-width="1.1" opacity="0.90"/><path d="M960 215Q999 219 994 378" stroke="#a89f95" stroke-width="1.1" opacity="0.66"/><path d="M915 209Q1116 245 1136 378" stroke="#a89f95" stroke-width="1.8" opacity="0.66"/><path d="M884 217Q988 237 987 378" stroke="#a89f95" stroke-width="1.4" opacity="0.77"/><path d="M929 228Q1071 272 1085 378" stroke="#a89f95" stroke-width="1.4" opacity="0.56"/><path d="M885 216Q1033 252 1041 378" stroke="#786f65" stroke-width="1.4" opacity="0.83"/><path d="M857 224Q1124 232 1125 378" stroke="#a89f95" stroke-width="3.2" opacity="0.71"/><path d="M926 209Q955 242 978 378" stroke="#897f74" stroke-width="1.1" opacity="0.53"/><path d="M902 223Q984 252 1002 378" stroke="#897f74" stroke-width="3.2" opacity="0.72"/><path d="M940 220Q1122 266 1123 378" stroke="#686057" stroke-width="3.2" opacity="0.55"/><path d="M859 224Q1054 231 1084 378" stroke="#786f65" stroke-width="1.1" opacity="0.66"/><path d="M914 216Q1120 229 1125 378" stroke="#686057" stroke-width="2.4" opacity="0.84"/><path d="M851 224Q1037 261 1048 378" stroke="#a89f95" stroke-width="1.4" opacity="0.64"/><path d="M965 220Q977 256 997 378" stroke="#47403b" stroke-width="0.9" opacity="0.76"/><path d="M957 212Q1126 239 1139 378" stroke="#a89f95" stroke-width="0.9" opacity="0.55"/><path d="M898 207Q975 226 982 378" stroke="#998f84" stroke-width="2.4" opacity="0.80"/><path d="M874 214Q1029 260 1040 378" stroke="#686057" stroke-width="1.8" opacity="0.63"/><path d="M908 211Q1062 247 1055 378" stroke="#a89f95" stroke-width="1.4" opacity="0.54"/><path d="M932 207Q1106 262 1137 378" stroke="#786f65" stroke-width="2.4" opacity="0.85"/><path d="M913 205Q983 216 1018 378" stroke="#b9b1a8" stroke-width="2.4" opacity="0.79"/><path d="M857 216Q1042 224 1061 378" stroke="#998f84" stroke-width="3.2" opacity="0.72"/><path d="M928 209Q1068 251 1083 378" stroke="#59514a" stroke-width="1.1" opacity="0.84"/><path d="M898 206Q1095 254 1130 378" stroke="#59514a" stroke-width="1.4" opacity="0.70"/><path d="M880 211Q1018 235 1040 378" stroke="#998f84" stroke-width="0.9" opacity="0.67"/><path d="M910 224Q1085 262 1102 378" stroke="#786f65" stroke-width="0.9" opacity="0.46"/><path d="M895 218Q1138 244 1131 378" stroke="#786f65" stroke-width="0.9" opacity="0.49"/><path d="M904 225Q1059 226 1076 378" stroke="#998f84" stroke-width="0.9" opacity="0.55"/><path d="M864 215Q1003 240 1014 378" stroke="#998f84" stroke-width="0.9" opacity="0.61"/><path d="M936 221Q988 237 991 378" stroke="#897f74" stroke-width="1.8" opacity="0.66"/><path d="M957 210Q1132 211 1136 378" stroke="#47403b" stroke-width="3.2" opacity="0.76"/><path d="M921 213Q1011 266 1020 378" stroke="#a89f95" stroke-width="2.4" opacity="0.48"/><path d="M892 218Q1037 226 1043 378" stroke="#a89f95" stroke-width="1.4" opacity="0.88"/><path d="M855 239Q935 273 926 378" stroke="#786f65" stroke-width="1.4" opacity="0.80"/><path d="M879 224Q945 258 903 378" stroke="#998f84" stroke-width="2.4" opacity="0.60"/><path d="M881 244Q950 282 946 378" stroke="#786f65" stroke-width="1.8" opacity="0.89"/><path d="M860 227Q934 267 921 378" stroke="#686057" stroke-width="1.8" opacity="0.58"/><path d="M845 223Q920 272 923 378" stroke="#a89f95" stroke-width="0.9" opacity="0.58"/><path d="M853 242Q919 298 955 378" stroke="#cbc5bd" stroke-width="2.4" opacity="0.76"/><path d="M900 225Q936 274 905 378" stroke="#a89f95" stroke-width="1.1" opacity="0.80"/><path d="M888 244Q913 303 917 378" stroke="#786f65" stroke-width="3.2" opacity="0.54"/><path d="M860 238Q932 284 944 378" stroke="#59514a" stroke-width="1.4" opacity="0.80"/><path d="M859 232Q954 266 949 378" stroke="#897f74" stroke-width="1.8" opacity="0.68"/><path d="M857 221Q927 263 905 378" stroke="#686057" stroke-width="2.4" opacity="0.70"/><path d="M869 231Q931 296 973 378" stroke="#dedad4" stroke-width="1.4" opacity="0.84"/><path d="M867 229Q939 285 965 378" stroke="#47403b" stroke-width="1.4" opacity="0.68"/><path d="M846 216Q1009 258 1074 378" stroke="#897f74" stroke-width="2.4" opacity="0.55"/><path d="M901 223Q963 277 967 378" stroke="#897f74" stroke-width="2.4" opacity="0.88"/><path d="M860 216Q936 284 979 378" stroke="#59514a" stroke-width="0.9" opacity="0.47"/><path d="M867 236Q988 269 1013 378" stroke="#a89f95" stroke-width="2.4" opacity="0.74"/><path d="M900 236Q956 289 966 378" stroke="#686057" stroke-width="0.9" opacity="0.88"/><path d="M885 227Q962 290 1009 378" stroke="#b9b1a8" stroke-width="3.2" opacity="0.55"/><path d="M847 223Q973 260 997 378" stroke="#a89f95" stroke-width="0.9" opacity="0.57"/><path d="M876 237Q992 283 1046 378" stroke="#59514a" stroke-width="1.4" opacity="0.79"/><path d="M901 235Q982 278 991 378" stroke="#998f84" stroke-width="0.9" opacity="0.66"/><path d="M867 227Q959 282 1000 378" stroke="#786f65" stroke-width="1.1" opacity="0.86"/><path d="M899 229Q1027 267 1065 378" stroke="#59514a" stroke-width="1.1" opacity="0.49"/><path d="M882 226Q1008 266 1045 378" stroke="#b9b1a8" stroke-width="1.8" opacity="0.83"/><path d="M883 229Q986 266 996 378" stroke="#897f74" stroke-width="3.2" opacity="0.61"/><path d="M865 237Q950 284 977 378" stroke="#a89f95" stroke-width="1.8" opacity="0.84"/><path d="M861 227Q938 286 974 378" stroke="#a89f95" stroke-width="1.4" opacity="0.81"/><path d="M861 218Q966 274 1010 378" stroke="#59514a" stroke-width="2.4" opacity="0.48"/><path d="M899 235Q970 282 980 378" stroke="#686057" stroke-width="1.4" opacity="0.79"/><path d="M903 228Q964 288 986 378" stroke="#686057" stroke-width="1.8" opacity="0.58"/><path d="M899 217Q992 280 1042 378" stroke="#cbc5bd" stroke-width="0.9" opacity="0.65"/><path d="M875 230Q987 268 1008 378" stroke="#b9b1a8" stroke-width="1.4" opacity="0.53"/><path d="M871 242Q961 282 981 378" stroke="#59514a" stroke-width="1.1" opacity="0.68"/><path d="M859 220Q990 262 1027 378" stroke="#a89f95" stroke-width="3.2" opacity="0.67"/><path d="M861 221Q986 267 1028 378" stroke="#a89f95" stroke-width="2.4" opacity="0.59"/><path d="M846 236Q979 269 1017 378" stroke="#b9b1a8" stroke-width="2.4" opacity="0.81"/><path d="M865 240Q993 284 1059 378" stroke="#47403b" stroke-width="1.8" opacity="0.51"/><path d="M885 222Q1008 257 1023 378" stroke="#47403b" stroke-width="3.2" opacity="0.62"/><path d="M881 215Q978 273 1017 378" stroke="#897f74" stroke-width="0.9" opacity="0.61"/><path d="M860 240Q1007 273 1065 378" stroke="#a89f95" stroke-width="2.4" opacity="0.79"/><path d="M849 241Q990 285 1069 378" stroke="#897f74" stroke-width="2.4" opacity="0.81"/><path d="M853 222Q946 270 966 378" stroke="#686057" stroke-width="1.4" opacity="0.56"/><path d="M894 216Q971 264 967 378" stroke="#686057" stroke-width="0.9" opacity="0.83"/><path d="M883 229Q962 280 984 378" stroke="#786f65" stroke-width="0.9" opacity="0.77"/><path d="M848 219Q963 273 1014 378" stroke="#686057" stroke-width="0.9" opacity="0.50"/><path d="M898 231Q959 290 982 378" stroke="#998f84" stroke-width="1.8" opacity="0.79"/><path d="M855 240Q987 288 1068 378" stroke="#786f65" stroke-width="2.4" opacity="0.69"/><path d="M869 243Q982 291 1048 378" stroke="#686057" stroke-width="1.4" opacity="0.77"/><path d="M896 232Q1008 287 1073 378" stroke="#786f65" stroke-width="2.4" opacity="0.47"/><path d="M876 244Q991 295 1067 378" stroke="#786f65" stroke-width="3.2" opacity="0.46"/><path d="M852 221Q940 285 994 378" stroke="#998f84" stroke-width="1.1" opacity="0.51"/><path d="M903 238Q1023 278 1067 378" stroke="#a89f95" stroke-width="0.9" opacity="0.47"/><path d="M883 223Q981 284 1036 378" stroke="#897f74" stroke-width="0.9" opacity="0.73"/><path d="M860 231Q986 262 1007 378" stroke="#686057" stroke-width="1.4" opacity="0.61"/><path d="M855 217Q1014 256 1070 378" stroke="#a89f95" stroke-width="0.9" opacity="0.66"/><path d="M877 219Q938 287 970 378" stroke="#686057" stroke-width="1.8" opacity="0.71"/><path d="M861 237Q974 290 1044 378" stroke="#786f65" stroke-width="3.2" opacity="0.71"/><path d="M884 221Q992 276 1040 378" stroke="#897f74" stroke-width="2.4" opacity="0.67"/><path d="M894 216Q961 283 995 378" stroke="#897f74" stroke-width="2.4" opacity="0.63"/><path d="M900 220Q1008 280 1069 378" stroke="#786f65" stroke-width="1.4" opacity="0.58"/><path d="M904 224Q991 289 1048 378" stroke="#59514a" stroke-width="1.4" opacity="0.65"/><path d="M849 227Q971 268 1008 378" stroke="#59514a" stroke-width="1.1" opacity="0.90"/><path d="M886 243Q985 279 1005 378" stroke="#59514a" stroke-width="1.1" opacity="0.73"/><path d="M896 240Q999 275 1017 378" stroke="#998f84" stroke-width="1.8" opacity="0.57"/><path d="M883 234Q989 284 1039 378" stroke="#59514a" stroke-width="1.8" opacity="0.79"/><path d="M880 230Q1010 276 1071 378" stroke="#786f65" stroke-width="1.4" opacity="0.84"/><path d="M881 226Q975 279 1009 378" stroke="#998f84" stroke-width="1.4" opacity="0.61"/><path d="M877 233Q963 299 1033 378" stroke="#998f84" stroke-width="1.8" opacity="0.62"/><path d="M863 231Q986 282 1051 378" stroke="#786f65" stroke-width="1.1" opacity="0.49"/><path d="M900 225Q1026 263 1056 378" stroke="#b9b1a8" stroke-width="1.1" opacity="0.89"/><path d="M898 244Q948 295 958 378" stroke="#a89f95" stroke-width="1.4" opacity="0.86"/><path d="M891 231Q1015 279 1075 378" stroke="#897f74" stroke-width="3.2" opacity="0.64"/><path d="M873 216Q984 274 1036 378" stroke="#47403b" stroke-width="0.9" opacity="0.69"/><path d="M851 226Q961 275 1003 378" stroke="#897f74" stroke-width="1.1" opacity="0.88"/><path d="M874 228Q1007 259 1030 378" stroke="#786f65" stroke-width="2.4" opacity="0.79"/><path d="M851 226Q936 293 999 378" stroke="#786f65" stroke-width="1.1" opacity="0.50"/><path d="M899 236Q1031 263 1053 378" stroke="#a89f95" stroke-width="1.8" opacity="0.73"/><path d="M876 239Q978 269 980 378" stroke="#786f65" stroke-width="0.9" opacity="0.73"/><path d="M881 226Q1016 271 1074 378" stroke="#47403b" stroke-width="1.8" opacity="0.45"/><path d="M845 236Q984 266 1021 378" stroke="#786f65" stroke-width="0.9" opacity="0.71"/><path d="M885 221Q984 272 1015 378" stroke="#686057" stroke-width="3.2" opacity="0.85"/><path d="M876 219Q964 270 979 378" stroke="#59514a" stroke-width="2.4" opacity="0.79"/><path d="M851 218Q946 272 975 378" stroke="#a89f95" stroke-width="2.4" opacity="0.64"/><path d="M893 235Q1000 278 1037 378" stroke="#59514a" stroke-width="1.1" opacity="0.61"/><path d="M896 213Q939 250 943 325" stroke="#52463f" stroke-width="1.8" opacity="0.53"/><path d="M917 207Q997 222 1019 294" stroke="#5f5249" stroke-width="1.2" opacity="0.60"/><path d="M904 207Q969 248 1009 316" stroke="#5f5249" stroke-width="2.6" opacity="0.52"/><path d="M904 229Q980 230 1013 274" stroke="#2f2824" stroke-width="1.8" opacity="0.52"/><path d="M918 225Q946 272 959 334" stroke="#453b35" stroke-width="2.6" opacity="0.50"/><path d="M881 229Q928 250 948 298" stroke="#5f5249" stroke-width="2.6" opacity="0.51"/><path d="M886 209Q946 232 984 277" stroke="#453b35" stroke-width="3.4" opacity="0.46"/><path d="M903 207Q955 232 989 274" stroke="#453b35" stroke-width="1.2" opacity="0.43"/><path d="M932 226Q996 240 1011 304" stroke="#453b35" stroke-width="1.8" opacity="0.50"/><path d="M901 217Q955 247 985 303" stroke="#5f5249" stroke-width="1.8" opacity="0.44"/><path d="M923 209Q995 212 1012 270" stroke="#2f2824" stroke-width="2.6" opacity="0.56"/><path d="M918 219Q965 247 967 319" stroke="#3a312c" stroke-width="2.6" opacity="0.64"/><path d="M953 207Q1003 227 1043 258" stroke="#3a312c" stroke-width="1.8" opacity="0.66"/><path d="M902 211Q981 206 1004 256" stroke="#2f2824" stroke-width="2.6" opacity="0.43"/><path d="M948 208Q993 246 1008 314" stroke="#52463f" stroke-width="3.4" opacity="0.69"/><path d="M924 222Q995 248 1008 331" stroke="#453b35" stroke-width="1.2" opacity="0.50"/><path d="M956 224Q1030 222 1059 266" stroke="#5f5249" stroke-width="1.8" opacity="0.75"/><path d="M918 230Q953 249 965 293" stroke="#2f2824" stroke-width="1.8" opacity="0.64"/><path d="M884 207Q922 222 935 263" stroke="#5f5249" stroke-width="1.2" opacity="0.57"/><path d="M940 230Q997 242 1019 289" stroke="#2f2824" stroke-width="2.6" opacity="0.72"/><path d="M944 221Q1021 221 1049 270" stroke="#52463f" stroke-width="1.2" opacity="0.70"/><path d="M936 224Q996 265 1044 319" stroke="#52463f" stroke-width="1.8" opacity="0.66"/><path d="M913 230Q977 250 982 329" stroke="#2f2824" stroke-width="1.8" opacity="0.46"/><path d="M889 231Q946 266 958 345" stroke="#5f5249" stroke-width="1.2" opacity="0.62"/><path d="M900 224Q966 257 999 326" stroke="#453b35" stroke-width="1.2" opacity="0.73"/><path d="M958 221Q1009 223 1011 274" stroke="#453b35" stroke-width="2.6" opacity="0.45"/><path d="M886 215Q933 231 954 271" stroke="#453b35" stroke-width="3.4" opacity="0.62"/><path d="M903 212Q969 222 979 288" stroke="#52463f" stroke-width="2.6" opacity="0.40"/><path d="M947 221Q984 259 1004 312" stroke="#5f5249" stroke-width="1.8" opacity="0.62"/><path d="M895 231Q954 258 993 304" stroke="#52463f" stroke-width="1.2" opacity="0.49"/><path d="M900 208Q952 213 959 263" stroke="#5f5249" stroke-width="1.2" opacity="0.41"/><path d="M922 221Q959 257 983 305" stroke="#5f5249" stroke-width="3.4" opacity="0.38"/><path d="M948 231Q1005 239 1028 280" stroke="#5f5249" stroke-width="3.4" opacity="0.43"/><path d="M932 206Q1004 231 1036 298" stroke="#52463f" stroke-width="1.8" opacity="0.38"/><path d="M951 207Q999 218 1019 258" stroke="#2f2824" stroke-width="1.8" opacity="0.39"/><path d="M948 214Q1011 228 1031 284" stroke="#52463f" stroke-width="2.6" opacity="0.44"/><path d="M893 230Q949 254 992 290" stroke="#3a312c" stroke-width="3.4" opacity="0.71"/><path d="M970 219Q1020 233 1045 271" stroke="#2f2824" stroke-width="1.2" opacity="0.41"/><path d="M902 210Q973 216 986 282" stroke="#5f5249" stroke-width="3.4" opacity="0.43"/><path d="M949 206Q1023 236 1048 314" stroke="#5f5249" stroke-width="1.8" opacity="0.46"/><path d="M943 219Q994 237 1012 286" stroke="#453b35" stroke-width="1.8" opacity="0.50"/><path d="M880 227Q941 253 968 312" stroke="#2f2824" stroke-width="2.6" opacity="0.56"/><path d="M921 220Q978 231 1004 272" stroke="#2f2824" stroke-width="1.2" opacity="0.67"/><path d="M886 224Q946 236 968 287" stroke="#52463f" stroke-width="3.4" opacity="0.61"/><path d="M893 228Q958 248 970 319" stroke="#453b35" stroke-width="3.4" opacity="0.63"/><path d="M894 221Q947 265 973 337" stroke="#453b35" stroke-width="3.4" opacity="0.51"/><path d="M891 211Q950 245 993 295" stroke="#52463f" stroke-width="1.2" opacity="0.43"/><path d="M944 224Q990 244 1000 301" stroke="#3a312c" stroke-width="1.2" opacity="0.69"/><path d="M945 227Q987 249 994 307" stroke="#3a312c" stroke-width="1.2" opacity="0.53"/><path d="M945 220Q1016 231 1053 275" stroke="#3a312c" stroke-width="1.8" opacity="0.50"/><path d="M939 217Q983 216 982 260" stroke="#453b35" stroke-width="3.4" opacity="0.47"/><path d="M947 217Q1025 235 1049 307" stroke="#2f2824" stroke-width="1.2" opacity="0.72"/><path d="M963 210Q1033 220 1055 278" stroke="#3a312c" stroke-width="2.6" opacity="0.40"/><path d="M915 225Q975 268 1022 323" stroke="#2f2824" stroke-width="2.6" opacity="0.39"/><path d="M932 227Q978 262 980 341" stroke="#52463f" stroke-width="2.6" opacity="0.43"/><path d="M922 228Q968 247 1003 277" stroke="#3a312c" stroke-width="1.2" opacity="0.67"/><path d="M898 220Q942 253 958 315" stroke="#453b35" stroke-width="2.6" opacity="0.57"/><path d="M946 227Q1012 234 1052 268" stroke="#453b35" stroke-width="3.4" opacity="0.55"/><path d="M963 227Q1010 229 1005 281" stroke="#2f2824" stroke-width="3.4" opacity="0.69"/><path d="M972 224Q1037 224 1043 282" stroke="#2f2824" stroke-width="1.2" opacity="0.49"/><path d="M930 214Q965 249 979 304" stroke="#52463f" stroke-width="3.4" opacity="0.48"/><path d="M924 230Q973 247 987 297" stroke="#453b35" stroke-width="1.2" opacity="0.45"/><path d="M963 222Q1014 262 1047 320" stroke="#5f5249" stroke-width="2.6" opacity="0.38"/><path d="M974 215Q1023 250 1054 302" stroke="#3a312c" stroke-width="1.2" opacity="0.70"/><path d="M954 222Q1008 245 1038 291" stroke="#453b35" stroke-width="1.8" opacity="0.62"/><path d="M909 226Q976 245 1001 307" stroke="#52463f" stroke-width="3.4" opacity="0.48"/><path d="M947 223Q1015 257 1049 326" stroke="#453b35" stroke-width="1.8" opacity="0.75"/><path d="M894 211Q961 243 997 305" stroke="#5f5249" stroke-width="2.6" opacity="0.72"/><path d="M936 210Q1000 221 1026 270" stroke="#52463f" stroke-width="1.2" opacity="0.72"/><path d="M935 208Q991 222 988 295" stroke="#52463f" stroke-width="3.4" opacity="0.64"/><path d="M952 230Q1027 217 991 314" stroke="#d0cac3" stroke-width="1.1" opacity="0.41"/><path d="M876 214Q1003 232 1064 317" stroke="#d0cac3" stroke-width="0.7" opacity="0.76"/><path d="M888 221Q936 252 949 319" stroke="#d0cac3" stroke-width="0.7" opacity="0.64"/><path d="M868 229Q1003 257 1096 327" stroke="#d0cac3" stroke-width="0.7" opacity="0.51"/><path d="M924 206Q987 225 991 302" stroke="#d0cac3" stroke-width="1.1" opacity="0.41"/><path d="M909 224Q1049 215 1082 314" stroke="#d0cac3" stroke-width="0.7" opacity="0.43"/><path d="M921 229Q1077 223 1118 331" stroke="#d0cac3" stroke-width="0.7" opacity="0.41"/><path d="M892 225Q988 232 990 332" stroke="#d0cac3" stroke-width="0.9" opacity="0.46"/><path d="M862 212Q977 258 1031 366" stroke="#d0cac3" stroke-width="0.9" opacity="0.57"/><path d="M914 223Q1017 245 1035 351" stroke="#d0cac3" stroke-width="0.9" opacity="0.49"/><path d="M922 230Q1015 222 1021 302" stroke="#d0cac3" stroke-width="1.1" opacity="0.71"/><path d="M958 219Q1028 223 983 341" stroke="#d0cac3" stroke-width="0.7" opacity="0.50"/><path d="M916 209Q1022 271 1084 376" stroke="#d0cac3" stroke-width="1.1" opacity="0.49"/><path d="M936 209Q953 242 935 310" stroke="#d0cac3" stroke-width="1.1" opacity="0.48"/><path d="M938 214Q1047 230 1045 358" stroke="#d0cac3" stroke-width="1.1" opacity="0.74"/><path d="M938 221Q1002 253 997 355" stroke="#d0cac3" stroke-width="0.9" opacity="0.49"/></g><path d="M1050 240 C1100 275 1140 330 1136 385 L1040 385 C1065 335 1070 285 1050 240Z" fill="#c4b09a" opacity="0.38" filter="url(#bl3)"/><path d="M800 268 C772 305 756 345 756 385 L830 385 C815 345 815 305 830 268Z" fill="#b5aaa0" opacity="0.25" filter="url(#bl3)"/></g><path d="M826 735 L1080 735 L1080 830 L1017 949 L940 949 L835 812 Z" fill="url(#sk)"/><ellipse cx="950" cy="748" rx="85" ry="22" fill="#cfa48e" opacity="0.7" filter="url(#bl3)"/><path d="M838 790 L860 800 L950 949 L930 949 Z" fill="#d2a890" opacity="0.35" filter="url(#bl3)"/><path d="M1074 800 L1052 810 L1005 949 L1022 949 Z" fill="#d2a890" opacity="0.4" filter="url(#bl3)"/><circle cx="913" cy="872" r="1.8" fill="#8a4f33"/><path d="M832 778 L822 812 L835 880 L847 949 L941 949 L934 942 L837 812 Z" fill="#cfe3f6"/><path d="M832 778 L822 812 L828 845 L838 815 Z" fill="#deedfa"/><path d="M1073 745 L1074 825 L1017 949 L1071 949 L1078 885 L1085 800 Z" fill="#cfe3f6"/><path d="M1060 860 L1040 905 L1017 949 L1035 949 L1066 880 Z" fill="#e3f0fb" opacity="0.7"/><path d="M646 839 C670 829 700 818 741 806 C755 802 770 794 781 785 L797 735 L833 735 L832 778 L822 812 L835 880 L847 949 L646 949 Z" fill="#14161d"/><path d="M760 800 C745 850 735 900 733 949 L740 949 C743 900 750 850 766 803Z" fill="#242834" opacity="0.55"/><path d="M797 735 L824 735 C818 752 806 768 781 786 L776 783 C790 768 796 752 797 735Z" fill="#5b4a3d" filter="url(#bl)"/><path d="M822 740 C815 757 800 772 781 784" fill="none" stroke="#b7a48c" stroke-width="1.1" opacity="0.8"/><path d="M806 740 C803 755 795 768 784 778" fill="none" stroke="#86705c" stroke-width="2" opacity="0.7"/><path d="M831 772 C815 780 800 795 792 812 M785 790 C786 800 785 806 786 812" fill="none" stroke="#4f4a44" stroke-width="0.8" opacity="0.8"/><path d="M1096 735 C1112 752 1128 782 1138 813 L1146 815 C1141 785 1133 757 1121 735 Z" fill="#86664a" filter="url(#bl)"/><path d="M1104 740 C1118 760 1130 785 1139 810" fill="none" stroke="#b89a7c" stroke-width="1.6" opacity="0.8"/><path d="M1074 735 L1094 735 C1100 755 1110 775 1122 796 L1114 792 C1100 775 1086 758 1074 742 Z" fill="#96806a" filter="url(#bl)"/><path d="M1073 740 L1085 800 L1078 885 L1071 949 L1276 949 L1276 854 C1250 846 1225 839 1204 833 C1180 826 1160 820 1145 814 L1133 811 L1114 790 L1090 760 L1076 742 Z" fill="#14161d"/><path d="M1150 830 C1175 870 1195 910 1200 949 L1208 949 C1202 905 1183 865 1158 830Z" fill="#232733" opacity="0.5"/></g></svg>
<svg style="left:10px;top:94px;" width="26" height="24" viewBox="0 0 26 24"><path d="M4.8 5.2V14.7L11.8 10.4Z" fill="#3a3a3a"/><path d="M17.2 9.6V17.2M13.4 13.4H21" stroke="#3a3a3a" stroke-width="1" fill="none"/><path d="M17.2 8.2L15.7 10.2H18.7ZM17.2 18.6L15.7 16.6H18.7ZM12 13.4L14 11.9V14.9ZM22.4 13.4L20.4 11.9V14.9Z" fill="#3a3a3a"/></svg>
<svg style="left:10px;top:116px;" width="26" height="24" viewBox="0 0 26 24"><rect x="6.5" y="6.5" width="13" height="12" fill="none" stroke="#3a3a3a" stroke-width="1.4" stroke-dasharray="3 2"/><path d="M23.6 19.6V22.7H20.5Z" fill="#111"/></svg>
<svg style="left:10px;top:139px;" width="26" height="24" viewBox="0 0 26 24"><ellipse cx="13.2" cy="10.3" rx="7.4" ry="4.8" fill="none" stroke="#3a3a3a" stroke-width="1.5" transform="rotate(-14 13.2 10.3)"/><path d="M6.2 13C7.5 12.3 9.3 13 9.3 14.4C9.3 15.8 7.2 15.8 7.2 14.6M8.8 15.6C10 16.6 9.6 18.2 8.6 19.2" fill="none" stroke="#3a3a3a" stroke-width="1.2"/><path d="M23.6 19.6V22.7H20.5Z" fill="#111"/></svg>
<svg style="left:10px;top:163px;" width="26" height="24" viewBox="0 0 26 24"><circle cx="9.5" cy="11.5" r="5" fill="none" stroke="#3a3a3a" stroke-width="1.2" stroke-dasharray="1.2 1.3"/><path d="M7.5 15.6C10.5 14.8 12.5 13 14.2 10.2L17 12.4C16.4 16.2 12 18 7.5 15.6Z" fill="#3a3a3a"/><path d="M15.5 11.2L21.5 4.8" stroke="#5a5a5a" stroke-width="2"/><path d="M15.8 11L21.3 5" stroke="#cfcfcf" stroke-width="0.7"/><path d="M23.6 19.6V22.7H20.5Z" fill="#111"/></svg>
<svg style="left:10px;top:186px;" width="26" height="24" viewBox="0 0 26 24"><path d="M9 3.5V15H20.5M5 7.5H16.5V19" fill="none" stroke="#3a3a3a" stroke-width="2.1"/><path d="M10 14L19.5 4.5" stroke="#3a3a3a" stroke-width="0.9"/><path d="M23.6 19.6V22.7H20.5Z" fill="#111"/></svg>
<svg style="left:10px;top:209px;" width="26" height="24" viewBox="0 0 26 24"><path d="M6 19.5L7 16L14.5 8.5L17 11L9.5 18.5Z" fill="#f4f4f4" stroke="#3a3a3a" stroke-width="1"/><path d="M13.5 7L18.5 12" stroke="#222" stroke-width="2.6"/><path d="M15.8 9.7L19 6.5" stroke="#222" stroke-width="3.8" stroke-linecap="round"/><path d="M23.6 19.6V22.7H20.5Z" fill="#111"/></svg>
<svg style="left:10px;top:236.5px;" width="26" height="24" viewBox="0 0 26 24"><circle cx="9" cy="10.5" r="5.2" fill="#bcd6f0" stroke="#222" stroke-width="1.1" stroke-dasharray="1.1 1.4"/><g transform="rotate(-40 15 12)"><rect x="6" y="8.5" width="18" height="7.4" rx="3.6" fill="#4d5157" stroke="#2a2c30" stroke-width="0.8"/><rect x="11.5" y="9" width="7" height="6.4" fill="#6c7178"/><g fill="#b8bcc2"><circle cx="13.3" cy="10.8" r="0.6"/><circle cx="16.6" cy="10.8" r="0.6"/><circle cx="13.3" cy="13.6" r="0.6"/><circle cx="16.6" cy="13.6" r="0.6"/><circle cx="15" cy="12.2" r="0.6"/></g></g><path d="M23.6 19.6V22.7H20.5Z" fill="#111"/></svg>
<svg style="left:10px;top:259px;" width="26" height="24" viewBox="0 0 26 24"><path d="M4.6 16.8C8 15.8 10.5 13.5 13 10L16.3 12.8C15.5 17.5 10 19.6 4.6 16.8Z" fill="#3a3a3a"/><path d="M15.2 11.8L22.5 4.5" stroke="#5a5a5a" stroke-width="2.4"/><path d="M15.5 11.5L22.2 4.8" stroke="#d6d6d6" stroke-width="0.8"/><path d="M23.6 19.6V22.7H20.5Z" fill="#111"/></svg>
<svg style="left:10px;top:282px;" width="26" height="24" viewBox="0 0 26 24"><circle cx="12.5" cy="6" r="2.7" fill="#3a3a3a"/><path d="M11.2 7H13.8L14.4 13.5H10.6Z" fill="#3a3a3a"/><rect x="5" y="13.2" width="15" height="5" rx="1" fill="#5a5a5a" stroke="#3a3a3a" stroke-width="0.8"/><rect x="5.5" y="19" width="14" height="1.2" fill="#3a3a3a"/><path d="M23.6 19.6V22.7H20.5Z" fill="#111"/></svg>
<svg style="left:10px;top:305px;" width="26" height="24" viewBox="0 0 26 24"><path d="M4.5 18.6C7.5 17.8 9.8 16 11.8 13L14.8 15.4C14 19.5 9 21 4.5 18.6Z" fill="#3a3a3a"/><path d="M13.8 14L20.5 6.5" stroke="#5a5a5a" stroke-width="2.2"/><path d="M14 13.8L20.3 6.8" stroke="#d6d6d6" stroke-width="0.7"/><path d="M7.5 9C9 6 13 5 15.5 6.5" fill="none" stroke="#3a3a3a" stroke-width="1.5"/><path d="M5.5 8.5L9.5 7L8.8 11Z" fill="#3a3a3a"/><path d="M19 11C20.5 14 19 18 16.5 19.5" fill="none" stroke="#3a3a3a" stroke-width="1" stroke-dasharray="1 1.4"/><path d="M23.6 19.6V22.7H20.5Z" fill="#111"/></svg>
<svg style="left:10px;top:328px;" width="26" height="24" viewBox="0 0 26 24"><path d="M5.1 13.7L11.8 6.6L21.8 5.3L14.6 13.7Z" fill="#8a8a8a"/><path d="M5.1 13.7H14.6V17.8H5.1Z" fill="#4c4c4c"/><path d="M14.6 13.7L21.8 5.3V9.4L14.6 17.8Z" fill="#363636"/><path d="M23.6 19.6V22.7H20.5Z" fill="#111"/></svg>
<svg style="left:10px;top:351px;" width="26" height="24" viewBox="0 0 26 24"><defs><linearGradient id="tgr" x1="0" y1="0" x2="1" y2="0"><stop offset="0" stop-color="#2e2e2e"/><stop offset="1" stop-color="#f4f4f4"/></linearGradient></defs><rect x="5.5" y="6.5" width="15" height="11" fill="url(#tgr)" stroke="#333" stroke-width="1"/><path d="M23.6 19.6V22.7H20.5Z" fill="#111"/></svg>
<svg style="left:10px;top:373.5px;" width="26" height="24" viewBox="0 0 26 24"><path d="M12.5 4.5L17.5 18.5H7.5Z" fill="#e6e6e6" stroke="#444" stroke-width="1.1" stroke-linejoin="round"/><path d="M23.6 19.6V22.7H20.5Z" fill="#111"/></svg>
<svg style="left:10px;top:396px;" width="26" height="24" viewBox="0 0 26 24"><circle cx="10.5" cy="9.5" r="5" fill="#444"/><circle cx="9.3" cy="8" r="2" fill="#6e6e6e"/><path d="M14 13.2L20 19" stroke="#222" stroke-width="1.8"/><path d="M23.6 19.6V22.7H20.5Z" fill="#111"/></svg>
<svg style="left:10px;top:424px;" width="26" height="24" viewBox="0 0 26 24"><path d="M5 20L8.5 10.5L14.5 6.5L19.5 11.5L15 17.5Z" fill="#f0f0f0" stroke="#444" stroke-width="1"/><path d="M5.5 19.5L12.5 12.5" stroke="#444" stroke-width="0.9"/><circle cx="12.5" cy="12.5" r="1.2" fill="#333"/><path d="M15 5.5L17 3.5L22.5 9L20.5 11Z" fill="#333"/><path d="M23.6 19.6V22.7H20.5Z" fill="#111"/></svg>
<svg style="left:10px;top:446.5px;" width="26" height="24" viewBox="0 0 26 24"><text x="12.5" y="20.2" text-anchor="middle" font-size="21" fill="#3a3a3a" stroke="#3a3a3a" stroke-width="0.5" style="font-family:'Liberation Serif',serif">T</text><path d="M23.6 19.6V22.7H20.5Z" fill="#111"/></svg>
<svg style="left:10px;top:470px;" width="26" height="24" viewBox="0 0 26 24"><path d="M8.5 3.5V18.5L12 15.2L14.6 20.8L17.2 19.6L14.6 14.2L19 13.8Z" fill="#3a3a3a"/><path d="M23.6 19.6V22.7H20.5Z" fill="#111"/></svg>
<svg style="left:10px;top:492.5px;" width="26" height="24" viewBox="0 0 26 24"><defs><linearGradient id="rgr" x1="0" y1="0" x2="0" y2="1"><stop offset="0" stop-color="#c6c6c6"/><stop offset="1" stop-color="#8f8f8f"/></linearGradient></defs><rect x="6" y="6.5" width="14" height="11.5" fill="url(#rgr)" stroke="#444" stroke-width="1.1"/><path d="M23.6 19.6V22.7H20.5Z" fill="#111"/></svg>
<svg style="left:10px;top:519px;" width="26" height="24" viewBox="0 0 26 24"><circle cx="13.5" cy="9" r="4.2" fill="#d0d0d0" stroke="#8a8a8a" stroke-width="0.8"/><path d="M9.5 8.5C5 8.5 3.5 11 6.5 14C8.3 15.7 10.5 16.8 12.5 17.2M17.5 9.5C21 10.5 22.5 14 19.5 16.5C18.6 17.2 17.4 17.6 16.2 17.7" fill="none" stroke="#3a3a3a" stroke-width="1.5"/><path d="M8.6 14.6L14.6 17.6L9.2 19.8Z" fill="#3a3a3a"/><path d="M23.6 19.6V22.7H20.5Z" fill="#111"/></svg>
<svg style="left:10px;top:543px;" width="26" height="24" viewBox="0 0 26 24"><path d="M10 7C4.5 7 3 10.5 6.5 14C8.5 16 11 17 13 17.5M12 7.5C18 8 22.5 12 20 16C19 17.3 17.5 17.8 16 18" fill="none" stroke="#3a3a3a" stroke-width="1.6"/><path d="M9 15L15 18L9.5 20Z" fill="#3a3a3a"/><rect x="17" y="3" width="5.5" height="3" fill="#444"/><path d="M14 4.5H17" stroke="#444" stroke-width="1.2"/><rect x="13.5" y="3" width="1.2" height="3" fill="#444"/><path d="M23.6 19.6V22.7H20.5Z" fill="#111"/></svg>
<svg style="left:10px;top:565px;" width="26" height="24" viewBox="0 0 26 24"><path d="M9.5 20C7.5 17.5 5.5 15 4.2 13C3.5 11.8 5.2 10.8 6.3 11.9L8.6 14.2V7C8.6 5.6 10.8 5.6 10.8 7V11.5V5C10.8 3.6 13.2 3.6 13.2 5V11.5V5.6C13.2 4.2 15.6 4.2 15.6 5.6V12V7.6C15.6 6.3 18 6.3 18 7.6V15C18 17.2 17 18.8 16.4 20Z" fill="#f2f2f2" stroke="#333" stroke-width="1" stroke-linejoin="round"/><path d="M23.6 19.6V22.7H20.5Z" fill="#111"/></svg>
<svg style="left:10px;top:588.5px;" width="26" height="24" viewBox="0 0 26 24"><circle cx="11" cy="9.5" r="5.2" fill="#dedede" stroke="#444" stroke-width="1.4"/><path d="M14.8 13.5L20.5 19.5" stroke="#333" stroke-width="2.2" stroke-linecap="round"/></svg>
<svg style="left:9px;top:617px;" width="11" height="11" viewBox="0 0 11 11"><rect x="3.5" y="3.5" width="6.5" height="6.5" fill="#fff" stroke="#666" stroke-width="0.8"/><rect x="0" y="0" width="7" height="7" fill="#111"/></svg>
<svg style="left:26px;top:616.5px;" width="11" height="11" viewBox="0 0 11 11"><path d="M2.5 4.5C3.5 2 6 1.5 7.5 3.5M8.5 6.5C7.5 9 5 9.5 3.5 7.5" fill="none" stroke="#222" stroke-width="1.3"/><path d="M0.8 5.8L2.2 2.2L4.8 4.8ZM10.2 5.2L8.8 8.8L6.2 6.2Z" fill="#222"/><path d="M2.5 1.5V5.5H6.5M8.5 9.5V5.5H4.5" fill="none" stroke="#222" stroke-width="0" /></svg>
<div style="left:18px;top:642px;width:21px;height:21px;background:#fff;"></div>
<div style="left:8px;top:632px;width:21px;height:21px;background:#80a5c1;border:1px solid #f4f4f4;box-shadow:0 0 0 0.5px #b0b0b0;"></div>
<svg style="left:14px;top:669px;" width="17" height="13" viewBox="0 0 17 13"><rect x="0.5" y="0.5" width="16" height="11.5" fill="#f4f4f4" stroke="#333" stroke-width="1"/><path d="M1 12.5H17" stroke="#222" stroke-width="1"/><circle cx="8.5" cy="6.2" r="3.6" fill="#fff" stroke="#444" stroke-width="1"/></svg>
<svg style="left:1886.0px;top:96.0px;" width="22" height="22" viewBox="0 0 22 22"><g stroke="#3a3a3a" stroke-width="1" fill="none"><circle cx="11" cy="11" r="5.4" stroke-width="1.3"/><path d="M11 1.5V20.5M1.5 11H20.5M4.3 4.3L17.7 17.7M17.7 4.3L4.3 17.7"/></g><circle cx="11" cy="11" r="1.5" fill="#3a3a3a"/></svg>
<svg style="left:1886.0px;top:126.0px;" width="22" height="22" viewBox="0 0 22 22"><defs><radialGradient id="inf" cx="0.4" cy="0.3" r="0.8"><stop offset="0" stop-color="#8a8a8a"/><stop offset="1" stop-color="#333"/></radialGradient></defs><circle cx="11" cy="11" r="8.4" fill="url(#inf)"/><text x="11" y="16.3" text-anchor="middle" font-size="14" font-weight="bold" fill="#fff" style="font-family:'Liberation Serif',serif">i</text></svg>
<svg style="left:1886.0px;top:156.0px;" width="22" height="22" viewBox="0 0 22 22"><rect x="2.5" y="4.5" width="17" height="13" fill="#f6f6f6" stroke="#9a9a9a" stroke-width="0.8"/><path d="M3 17L4 13L5.5 14L7 10L8.5 11.5L10 8L11.5 10.5L13 9.5L14 12.5L15.5 7L17 11L19 9V17Z" fill="#3a3a3a"/></svg>
<svg style="left:1886.0px;top:201.0px;" width="22" height="22" viewBox="0 0 22 22"><path d="M2.5 13C2.5 7 8 3.5 13.5 3.5C18 3.5 20 6 19 8.5C18 10.5 15.5 10.5 15.5 12.5C15.5 14.5 18 14 17.5 16C17 18.5 12 19 8.5 18.5C4.5 18 2.5 16 2.5 13Z" fill="#4a4a4a"/><g fill="#e2e2e2"><circle cx="6.5" cy="13.5" r="1.6"/><circle cx="8" cy="9" r="1.6"/><circle cx="12.5" cy="7" r="1.6"/><circle cx="11.5" cy="15.5" r="1.7"/></g></svg>
<svg style="left:1886.0px;top:230.0px;" width="22" height="22" viewBox="0 0 22 22"><rect x="2.2" y="3.8" width="17.8" height="14" fill="#3a3a3a"/><rect x="3.0" y="4.5" width="3.5" height="3.7" fill="#555"/><rect x="7.2" y="4.5" width="3.5" height="3.7" fill="#777"/><rect x="11.4" y="4.5" width="3.5" height="3.7" fill="#999"/><rect x="15.6" y="4.5" width="3.5" height="3.7" fill="#f4f4f4"/><rect x="3.0" y="8.9" width="3.5" height="3.7" fill="#666"/><rect x="7.2" y="8.9" width="3.5" height="3.7" fill="#555"/><rect x="11.4" y="8.9" width="3.5" height="3.7" fill="#aaa"/><rect x="15.6" y="8.9" width="3.5" height="3.7" fill="#fff"/><rect x="3.0" y="13.3" width="3.5" height="3.7" fill="#eee"/><rect x="7.2" y="13.3" width="3.5" height="3.7" fill="#ddd"/><rect x="11.4" y="13.3" width="3.5" height="3.7" fill="#fff"/><rect x="15.6" y="13.3" width="3.5" height="3.7" fill="#bbb"/></svg>
<svg style="left:1886.0px;top:260.5px;" width="22" height="22" viewBox="0 0 22 22"><rect x="6.5" y="3.5" width="12.5" height="11.5" fill="#ececec" stroke="#8a8a8a" stroke-width="0.8"/><text x="2.5" y="19.8" font-size="12" font-style="italic" font-weight="bold" fill="#1a1a1a" style="font-family:'Liberation Serif',serif">fx</text></svg>
<svg style="left:1886.0px;top:304.0px;" width="22" height="22" viewBox="0 0 22 22"><path d="M2 5.5C4 3.5 8 4 10.5 5.5L2.5 7.5Z" fill="#3a3a3a"/><path d="M10 5.8H20" stroke="#4a4a4a" stroke-width="1.6"/><path d="M4 14H12" stroke="#4a4a4a" stroke-width="1.6"/><path d="M12 14L18.5 9.5C20 11.5 20 16.5 18.5 18.5Z" fill="#5a5a5a"/></svg>
<svg style="left:1886.0px;top:333.5px;" width="22" height="22" viewBox="0 0 22 22"><path d="M7.5 10.5H15.5V18.5H7.5Z" fill="#f0f0f0" stroke="#222" stroke-width="2"/><path d="M9 10L6.5 3.5M11.5 10V2.5M14 10L17 4" stroke="#333" stroke-width="1.6"/><path d="M5 2.5L8 5L6 6Z M15.5 3C17.5 2 19.5 3.5 18.5 6L16 5Z" fill="#333"/></svg>
<svg style="left:1886.0px;top:363.5px;" width="22" height="22" viewBox="0 0 22 22"><path d="M2.5 5H7M2.5 8.5H7M2.5 12H7" stroke="#333" stroke-width="1.3" stroke-dasharray="1.5 1"/><circle cx="14" cy="6.5" r="2.5" fill="#333"/><path d="M13 8H15L15.5 13H12.5Z" fill="#333"/><rect x="8.5" y="13" width="11" height="4" fill="#4a4a4a"/><rect x="9" y="18" width="10" height="1.2" fill="#333"/></svg>
<svg style="left:1886px;top:409px;" width="22" height="22" viewBox="0 0 22 22"><text x="2.5" y="17.5" font-size="17" fill="#3c3c3c">A</text><path d="M15.5 4V19" stroke="#222" stroke-width="1"/></svg>
<svg style="left:1888px;top:438px;" width="18" height="22" viewBox="0 0 18 22"><text x="3.5" y="17" font-size="17" font-weight="bold" fill="#3c3c3c">¶</text></svg>
<svg style="left:1886.0px;top:483.0px;" width="22" height="22" viewBox="0 0 22 22"><circle cx="11" cy="11" r="5.6" fill="#f8f8f8" stroke="#333" stroke-width="1.2"/><path d="M15 7A5.6 5.6 0 0 0 7 15Z" fill="#222"/></svg>
<svg style="left:1886.0px;top:512.5px;" width="22" height="22" viewBox="0 0 22 22"><defs><linearGradient id="mk" x1="0" y1="0" x2="1" y2="1"><stop offset="0" stop-color="#d8d8d8"/><stop offset="1" stop-color="#5a5a5a"/></linearGradient></defs><rect x="2.5" y="5" width="17" height="12" fill="url(#mk)" stroke="#333" stroke-width="1"/><circle cx="11" cy="11" r="3.8" fill="#fff" stroke="#333" stroke-width="0.8"/></svg>
<svg style="left:1886.0px;top:556.0px;" width="22" height="22" viewBox="0 0 22 22"><path d="M11 3L20 8L11 13L2 8Z" fill="#f2f2f2" stroke="#9a9a9a" stroke-width="0.7"/><path d="M11 8L20 13L11 18.5L2 13Z" fill="#3a3a3a"/></svg>
<svg style="left:1886.0px;top:586.0px;" width="22" height="22" viewBox="0 0 22 22"><circle cx="11" cy="8" r="5" fill="#bdbdbd"/><circle cx="7.5" cy="13.5" r="5" fill="#4a4a4a"/><circle cx="14.5" cy="13.5" r="5" fill="#7a7a7a"/><path d="M11 9.5C13 10.5 13.5 13 12 15.5C11.5 16 10.5 16 10 15.5C8.5 13 9 10.5 11 9.5Z" fill="#f4f4f4"/></svg>
<svg style="left:1886.0px;top:616.5px;" width="22" height="22" viewBox="0 0 22 22"><path d="M4 18C5 10 8 5.5 11 5.5C14 5.5 17 10 18 18Z" fill="#ececec" stroke="#333" stroke-width="1"/><path d="M3 5.5H19" stroke="#333" stroke-width="1"/><rect x="1.5" y="3.8" width="3.4" height="3.4" fill="#333"/><rect x="17" y="3.8" width="3.4" height="3.4" fill="#333"/><rect x="2.3" y="16.3" width="3.4" height="3.4" fill="#fff" stroke="#333" stroke-width="0.9"/><rect x="16.3" y="16.3" width="3.4" height="3.4" fill="#fff" stroke="#333" stroke-width="0.9"/><rect x="9.3" y="3.8" width="3.4" height="3.4" fill="#fff" stroke="#333" stroke-width="0.9"/></svg>
<svg style="left:1886.0px;top:660.0px;" width="22" height="22" viewBox="0 0 22 22"><rect x="4" y="3" width="3.6" height="3.6" fill="#fff" stroke="#333" stroke-width="0.9"/><rect x="4" y="8.6" width="3.6" height="3.6" fill="#fff" stroke="#333" stroke-width="0.9"/><rect x="3.6" y="14.2" width="4.4" height="4.4" fill="#444"/><path d="M11.5 6.5C16 5 19 9 17.5 13C17 15 15.5 16.5 13.5 17.5" fill="none" stroke="#333" stroke-width="1.8"/><path d="M10 7.5L14.5 3.5L14.5 9Z" fill="#333"/></svg>
<div style="left:717px;top:360px;width:509px;height:382px;background:#fbfbfb;border:1px solid #b9b9b9;box-shadow:0 0 3px rgba(0,0,0,0.25);"></div>
<div style="left:1167px;top:361px;width:49px;height:31px;background:#c85050;"></div>
<svg style="left:1184px;top:369.5px;" width="15" height="14" viewBox="0 0 15 14"><path d="M1.5 1L13.5 13M13.5 1L1.5 13" stroke="#fff" stroke-width="2.1" fill="none"/></svg>
<span class="t" style="left:858.91px;top:374.00px;font-size:20px;line-height:20px;color:#1a1a1a;transform:scaleX(1.1444);">Размер изображения</span>
<div style="left:727px;top:404px;width:489px;height:327px;background:#ececec;border:1px solid #dadada;"></div>
<div style="left:739px;top:423px;width:12px;height:1px;background:#9c9c9c;"></div>
<div style="left:887px;top:423px;width:183px;height:1px;background:#9c9c9c;"></div>
<div style="left:739px;top:423px;width:1px;height:79px;background:#9c9c9c;"></div>
<div style="left:1069px;top:423px;width:1px;height:79px;background:#9c9c9c;"></div>
<div style="left:739px;top:501px;width:331px;height:1px;background:#9c9c9c;"></div>
<div style="left:740px;top:424px;width:11px;height:1px;background:#fafafa;"></div>
<div style="left:887px;top:424px;width:182px;height:1px;background:#fafafa;"></div>
<div style="left:740px;top:424px;width:1px;height:77px;background:#fafafa;"></div>
<div style="left:1070px;top:423px;width:1px;height:80px;background:#fafafa;"></div>
<div style="left:739px;top:502px;width:332px;height:1px;background:#fafafa;"></div>
<span class="t" style="left:755.41px;top:418.00px;font-size:12px;line-height:12px;color:#111;transform:scaleX(1.0163);">Размерность:</span>
<span class="t" style="left:846.97px;top:418.00px;font-size:12px;line-height:12px;color:#111;transform:scaleX(1.0602);">3,19M</span>
<div style="left:738px;top:520px;width:14px;height:1px;background:#9c9c9c;"></div>
<div style="left:932px;top:520px;width:140px;height:1px;background:#9c9c9c;"></div>
<div style="left:738px;top:520px;width:1px;height:111px;background:#9c9c9c;"></div>
<div style="left:1071px;top:520px;width:1px;height:111px;background:#9c9c9c;"></div>
<div style="left:738px;top:630px;width:334px;height:1px;background:#9c9c9c;"></div>
<div style="left:739px;top:521px;width:13px;height:1px;background:#fafafa;"></div>
<div style="left:932px;top:521px;width:139px;height:1px;background:#fafafa;"></div>
<div style="left:739px;top:521px;width:1px;height:109px;background:#fafafa;"></div>
<div style="left:1072px;top:520px;width:1px;height:112px;background:#fafafa;"></div>
<div style="left:738px;top:631px;width:335px;height:1px;background:#fafafa;"></div>
<span class="t" style="left:757.18px;top:515.00px;font-size:12px;line-height:12px;color:#111;transform:scaleX(1.0518);">Размер печатного оттиска:</span>
<span class="t" style="left:771.40px;top:448.00px;font-size:12px;line-height:12px;color:#111;transform:scaleX(1.0261);">Ширина:</span>
<div style="left:824px;top:443px;width:70px;height:22px;background:#fff;border:1px solid #ababab;"></div>
<span class="t" style="left:830.30px;top:448.00px;font-size:12px;line-height:12px;color:#111;">945</span>
<div style="left:902px;top:444px;width:66px;height:22px;background:#fff;border:1px solid #ababab;"></div>
<span class="t" style="left:908.35px;top:449.00px;font-size:13px;line-height:13px;color:#111;transform:scaleX(1.0081);">пикс.</span>
<svg style="left:948.5px;top:450.5px;" width="13" height="10" viewBox="0 0 13 10"><path d="M1 1L6.2 7.6L11.4 1" fill="none" stroke="#4d4d4d" stroke-width="2.4"/></svg>
<span class="t" style="left:775.41px;top:478.00px;font-size:12px;line-height:12px;color:#111;transform:scaleX(1.0093);">Высота:</span>
<div style="left:824px;top:473px;width:70px;height:22px;background:#fff;border:1px solid #ababab;"></div>
<span class="t" style="left:830.30px;top:478.00px;font-size:12px;line-height:12px;color:#111;">1181</span>
<div style="left:902px;top:474px;width:66px;height:22px;background:#fff;border:1px solid #ababab;"></div>
<span class="t" style="left:908.35px;top:479.00px;font-size:13px;line-height:13px;color:#111;transform:scaleX(1.0081);">пикс.</span>
<svg style="left:948.5px;top:480.5px;" width="13" height="10" viewBox="0 0 13 10"><path d="M1 1L6.2 7.6L11.4 1" fill="none" stroke="#4d4d4d" stroke-width="2.4"/></svg>
<svg style="left:976px;top:454px;" width="11" height="30" viewBox="0 0 11 30"><path d="M0 1H9.5V29.2H0" fill="none" stroke="#000" stroke-width="2"/></svg>
<svg style="left:990px;top:461.5px;" width="7" height="15" viewBox="0 0 7 15"><rect x="1.2" y="0.8" width="4.6" height="8" rx="2.3" fill="#e8e8e8" stroke="#444" stroke-width="1.1"/><rect x="1.2" y="6" width="4.6" height="8" rx="2.3" fill="#e8e8e8" stroke="#444" stroke-width="1.1"/><path d="M3.5 4V11" stroke="#555" stroke-width="1.1"/></svg>
<span class="t" style="left:771.40px;top:546.00px;font-size:12px;line-height:12px;color:#111;transform:scaleX(1.0261);">Ширина:</span>
<div style="left:824px;top:541px;width:70px;height:22px;background:#fff;border:1px solid #ababab;"></div>
<span class="t" style="left:830.30px;top:546.00px;font-size:12px;line-height:12px;color:#111;">4</span>
<div style="left:902px;top:542px;width:131px;height:22px;background:#fff;border:1px solid #ababab;"></div>
<span class="t" style="left:908.32px;top:547.00px;font-size:13px;line-height:13px;color:#111;transform:scaleX(1.0358);">см</span>
<svg style="left:1013.5px;top:548.5px;" width="13" height="10" viewBox="0 0 13 10"><path d="M1 1L6.2 7.6L11.4 1" fill="none" stroke="#4d4d4d" stroke-width="2.4"/></svg>
<span class="t" style="left:775.41px;top:576.00px;font-size:12px;line-height:12px;color:#111;transform:scaleX(1.0093);">Высота:</span>
<div style="left:824px;top:571px;width:70px;height:22px;background:#fff;border:1px solid #ababab;"></div>
<span class="t" style="left:830.30px;top:576.00px;font-size:12px;line-height:12px;color:#111;">5</span>
<div style="left:902px;top:572px;width:131px;height:22px;background:#fff;border:1px solid #ababab;"></div>
<span class="t" style="left:908.32px;top:577.00px;font-size:13px;line-height:13px;color:#111;transform:scaleX(1.0358);">см</span>
<svg style="left:1013.5px;top:578.5px;" width="13" height="10" viewBox="0 0 13 10"><path d="M1 1L6.2 7.6L11.4 1" fill="none" stroke="#4d4d4d" stroke-width="2.4"/></svg>
<span class="t" style="left:747.42px;top:606.00px;font-size:12px;line-height:12px;color:#111;transform:scaleX(1.0045);">Разрешение:</span>
<div style="left:824px;top:601px;width:70px;height:22px;background:#fff;border:1px solid #ababab;"></div>
<span class="t" style="left:830.30px;top:606.00px;font-size:12px;line-height:12px;color:#111;">600</span>
<div style="left:902px;top:602px;width:131px;height:22px;background:#fff;border:1px solid #ababab;"></div>
<span class="t" style="left:908.37px;top:607.00px;font-size:13px;line-height:13px;color:#111;transform:scaleX(0.9876);">пикс/дюйм</span>
<svg style="left:1013.5px;top:608.5px;" width="13" height="10" viewBox="0 0 13 10"><path d="M1 1L6.2 7.6L11.4 1" fill="none" stroke="#4d4d4d" stroke-width="2.4"/></svg>
<svg style="left:1041px;top:552.3px;" width="11" height="30" viewBox="0 0 11 30"><path d="M0 1H9.5V29.2H0" fill="none" stroke="#000" stroke-width="2"/></svg>
<svg style="left:1055px;top:559.5px;" width="7" height="15" viewBox="0 0 7 15"><rect x="1.2" y="0.8" width="4.6" height="8" rx="2.3" fill="#e8e8e8" stroke="#444" stroke-width="1.1"/><rect x="1.2" y="6" width="4.6" height="8" rx="2.3" fill="#e8e8e8" stroke="#444" stroke-width="1.1"/><path d="M3.5 4V11" stroke="#555" stroke-width="1.1"/></svg>
<div style="left:738px;top:638px;width:19px;height:19px;background:#fff;border:1px solid #8c8c8c;"></div>
<svg style="left:741px;top:642px;" width="13" height="11" viewBox="0 0 13 11"><path d="M1.2 5.6L4.8 9.2L11.6 1.6" fill="none" stroke="#111" stroke-width="2.4"/></svg>
<span class="t" style="left:760.22px;top:640.00px;font-size:12px;line-height:12px;color:#111;">Масштабировать стили</span>
<div style="left:738px;top:658px;width:19px;height:19px;background:#fff;border:1px solid #8c8c8c;"></div>
<svg style="left:741px;top:662px;" width="13" height="11" viewBox="0 0 13 11"><path d="M1.2 5.6L4.8 9.2L11.6 1.6" fill="none" stroke="#111" stroke-width="2.4"/></svg>
<span class="t" style="left:760.20px;top:660.00px;font-size:12px;line-height:12px;color:#111;transform:scaleX(1.0319);">Сохранить пропорции</span>
<div style="left:738px;top:678px;width:19px;height:19px;background:#fff;border:1px solid #8c8c8c;"></div>
<svg style="left:741px;top:682px;" width="13" height="11" viewBox="0 0 13 11"><path d="M1.2 5.6L4.8 9.2L11.6 1.6" fill="none" stroke="#111" stroke-width="2.4"/></svg>
<span class="t" style="left:760.17px;top:680.00px;font-size:12px;line-height:12px;color:#111;transform:scaleX(1.0630);">Интерполяция:</span>
<div style="left:738px;top:701px;width:335px;height:22px;background:#fff;border:1px solid #ababab;"></div>
<span class="t" style="left:744.20px;top:706.00px;font-size:13px;line-height:13px;color:#111;transform:scaleX(0.9492);">Бикубическая (наилучшая для плавных градиентов)</span>
<svg style="left:1053.5px;top:707.5px;" width="13" height="10" viewBox="0 0 13 10"><path d="M1 1L6.2 7.6L11.4 1" fill="none" stroke="#4d4d4d" stroke-width="2.4"/></svg>
<div style="left:1089px;top:422px;width:115px;height:18px;background:linear-gradient(#f4f4f4,#efefef 48%,#e4e4e4 52%,#dbdbdb);border:1px solid #3c9cf0;box-shadow:inset 0 0 0 1px #bfe0fb;"></div>
<span class="t" style="left:1137.52px;top:426.00px;font-size:12px;line-height:12px;color:#000;transform:scaleX(0.9955);">OK</span>
<div style="left:1089px;top:450px;width:115px;height:18px;background:linear-gradient(#f4f4f4,#efefef 48%,#e4e4e4 52%,#dbdbdb);border:1px solid #acacac;"></div>
<span class="t" style="left:1124.40px;top:454.00px;font-size:12px;line-height:12px;color:#000;transform:scaleX(1.0256);">Отмена</span>
<div style="left:1089px;top:485px;width:115px;height:18px;background:linear-gradient(#f4f4f4,#efefef 48%,#e4e4e4 52%,#dbdbdb);border:1px solid #acacac;"></div>
<span class="t" style="left:1126.54px;top:489.00px;font-size:12px;line-height:12px;color:#000;transform:scaleX(1.0970);">Авто...</span>
<div style="left:0px;top:1024px;width:1920px;height:56px;background:#646464;"></div>
<div style="left:0px;top:1024px;width:1920px;height:1px;background:#5a5a5a;"></div>
<div style="left:828px;top:1025px;width:80px;height:54px;background:#7c7c7c;border:1px solid #969696;"></div>
<div style="left:912px;top:1025px;width:80px;height:54px;background:#7c7c7c;border:1px solid #969696;"></div>
<div style="left:1080px;top:1025px;width:80px;height:54px;background:#9b9b9b;border:1px solid #dedede;"></div>
<svg style="left:13px;top:1030px;" width="44" height="44" viewBox="0 0 44 44"><path d="M1 7.2L17.8 4.6V21.1H1ZM19.6 4.3L43 1V21.1H19.6ZM1 22.9H17.8V39.4L1 36.9ZM19.6 22.9H43V43L19.6 39.7Z" fill="#fff"/></svg>
<div style="left:89px;top:1029px;width:45px;height:45px;background:#ffa900;"></div>
<svg style="left:100px;top:1039px;" width="24" height="24" viewBox="0 0 24 24"><path d="M12 0.5C14 0.5 15 2 16.5 2.2C18.5 2.5 20.5 3.5 21 6C22.5 7.5 23.3 9.5 22.8 12C23 14.5 22 16.5 20.5 18C19.5 20.5 17.5 22 15 22.3C14 23.2 12.8 23.6 12 23.6C11.2 23.6 10 23.2 9 22.3C6.5 22 4.5 20.5 3.5 18C2 16.5 1 14.5 1.2 12C0.7 9.5 1.5 7.5 3 6C3.5 3.5 5.5 2.5 7.5 2.2C9 2 10 0.5 12 0.5Z" fill="#5a3210"/><ellipse cx="12" cy="12.5" rx="6.6" ry="7.4" fill="#c8842c"/><circle cx="9.2" cy="11" r="1.7" fill="#fff"/><circle cx="14.8" cy="11" r="1.7" fill="#fff"/><circle cx="9.2" cy="11" r="0.8" fill="#222"/><circle cx="14.8" cy="11" r="0.8" fill="#222"/><path d="M10.6 14H13.4L12 15.6Z" fill="#3a1d08"/><path d="M9.5 17.2C11 18.4 13 18.4 14.5 17.2" stroke="#3a1d08" stroke-width="0.9" fill="none"/><path d="M8 7.5C10 5.5 14 5.5 16 7.5" stroke="#5a3210" stroke-width="2" fill="none"/></svg>
<svg style="left:172px;top:1027px;" width="48" height="48" viewBox="0 0 48 48"><defs><radialGradient id="ie1" cx="0.45" cy="0.5" r="0.6"><stop offset="0" stop-color="#9beafc"/><stop offset="0.55" stop-color="#4cc4f4"/><stop offset="1" stop-color="#1b8fdc"/></radialGradient><linearGradient id="ie2" x1="0" y1="0" x2="1" y2="0"><stop offset="0" stop-color="#f2a900"/><stop offset="0.45" stop-color="#ffe050"/><stop offset="1" stop-color="#eeb000"/></linearGradient></defs><g transform="translate(24.8,24.8) rotate(-40)"><ellipse cx="0" cy="0" rx="27.6" ry="13" fill="none" stroke="#d99a00" stroke-width="2.4"/></g><circle cx="25.7" cy="25.3" r="20" fill="url(#ie1)" stroke="#1c86d2" stroke-width="0.8"/><path d="M16.6 22A9.5 11.7 0 0 1 34.8 22Z" fill="#646464" stroke="#1c7cc8" stroke-width="0.7"/><path d="M16.3 26.8H47V33H32.85A9.5 11.7 0 0 1 16.3 26.8Z" fill="#646464"/><path d="M16.3 26.8H45.6M32.85 33H44" stroke="#1c7cc8" stroke-width="0.7" fill="none"/><g transform="translate(24.8,24.8) rotate(-40)"><path d="M-27.6 0.5A27.6 13 0 0 1 27.6 0.5" fill="none" stroke="url(#ie2)" stroke-width="3.4" stroke-linecap="round"/></g></svg>
<svg style="left:263px;top:1029px;" width="34" height="46" viewBox="0 0 34 46"><defs><linearGradient id="cb" x1="0" y1="0" x2="1" y2="1"><stop offset="0" stop-color="#c9e0f4"/><stop offset="1" stop-color="#7fb0dd"/></linearGradient></defs><rect x="0.6" y="0.6" width="32.8" height="44.8" rx="2.5" fill="url(#cb)" stroke="#5a8fc4" stroke-width="1.2"/><rect x="3.5" y="4" width="27" height="15" fill="#e9f3fb" stroke="#6e9ccb" stroke-width="1"/><rect x="4" y="4.5" width="26" height="2.6" fill="#f5a53a"/><rect x="22.5" y="9" width="5.5" height="8" rx="1.5" fill="none" stroke="#335b96" stroke-width="1.2"/><rect x="3.5" y="22.5" width="3.2" height="3.2" fill="#3f79b5"/><rect x="8.1" y="22.5" width="3.2" height="3.2" fill="#3f79b5"/><rect x="12.7" y="22.5" width="3.2" height="3.2" fill="#3f79b5"/><rect x="17.3" y="22.5" width="3.2" height="3.2" fill="#3f79b5"/><rect x="21.9" y="22.5" width="3.2" height="3.2" fill="#3f79b5"/><rect x="26.5" y="22.5" width="3.2" height="3.2" fill="#3f79b5"/><rect x="3.5" y="27.5" width="3.2" height="3.2" fill="#f3f6fa"/><rect x="8.1" y="27.5" width="3.2" height="3.2" fill="#f3f6fa"/><rect x="12.7" y="27.5" width="3.2" height="3.2" fill="#f3f6fa"/><rect x="17.3" y="27.5" width="3.2" height="3.2" fill="#3f79b5"/><rect x="21.9" y="27.5" width="3.2" height="3.2" fill="#3f79b5"/><rect x="26.5" y="27.5" width="3.2" height="3.2" fill="#3f79b5"/><rect x="3.5" y="32.5" width="3.2" height="3.2" fill="#f3f6fa"/><rect x="8.1" y="32.5" width="3.2" height="3.2" fill="#f3f6fa"/><rect x="12.7" y="32.5" width="3.2" height="3.2" fill="#f3f6fa"/><rect x="17.3" y="32.5" width="3.2" height="3.2" fill="#3f79b5"/><rect x="21.9" y="32.5" width="3.2" height="3.2" fill="#3f79b5"/><rect x="3.5" y="37.5" width="3.2" height="3.2" fill="#f3f6fa"/><rect x="8.1" y="37.5" width="3.2" height="3.2" fill="#f3f6fa"/><rect x="12.7" y="37.5" width="3.2" height="3.2" fill="#f3f6fa"/><rect x="17.3" y="37.5" width="3.2" height="3.2" fill="#3f79b5"/><rect x="21.9" y="37.5" width="3.2" height="3.2" fill="#3f79b5"/><rect x="26.5" y="32.3" width="3.4" height="8.4" fill="#ef8a17"/></svg>
<svg style="left:340px;top:1030px;" width="48" height="44" viewBox="0 0 48 44"><rect x="11" y="0.8" width="36" height="42.4" rx="2.2" fill="#185c37"/><path d="M13.2 0.8H29V11.4H11V3C11 1.8 12 0.8 13.2 0.8Z" fill="#21a366"/><path d="M29 0.8H44.8C46 0.8 47 1.8 47 3V11.4H29Z" fill="#33c481"/><rect x="11" y="11.4" width="18" height="10.6" fill="#107c41"/><rect x="29" y="11.4" width="18" height="10.6" fill="#21a366"/><rect x="29" y="22" width="18" height="10.6" fill="#107c41"/><rect x="0" y="10" width="24" height="24" rx="2" fill="#0e7a40"/><rect x="0" y="10" width="24" height="24" rx="2" fill="#107c41"/><path d="M6.2 15H10L12.2 19.6L14.6 15H18.1L14.1 22L18.2 29H14.6L12.1 24.2L9.6 29H6L10.2 22Z" fill="#fff"/></svg>
<svg style="left:429px;top:1032px;" width="38" height="41" viewBox="0 0 38 41"><defs><radialGradient id="ms" cx="0.5" cy="0.6" r="0.7"><stop offset="0" stop-color="#d2f1ff"/><stop offset="1" stop-color="#86cdfb"/></radialGradient></defs><rect x="0.5" y="0.5" width="37" height="30.5" rx="1.5" fill="#fdfdfd" stroke="#cfd4da" stroke-width="1"/><rect x="3.7" y="3.4" width="30.6" height="24.2" fill="url(#ms)" stroke="#0d5ba6" stroke-width="1.5"/><rect x="5" y="4.7" width="28" height="21.6" fill="none" stroke="#7fc4f2" stroke-width="1"/><path d="M6 40.5C8 35 13 32.3 19 32.3C25 32.3 30 35 32 40.5Z" fill="#f1f1f1" stroke="#c4c4c4" stroke-width="0.8"/></svg>
<svg style="left:513px;top:1032px;" width="38" height="41" viewBox="0 0 38 41"><defs><radialGradient id="ms2" cx="0.5" cy="0.6" r="0.7"><stop offset="0" stop-color="#d2f1ff"/><stop offset="1" stop-color="#86cdfb"/></radialGradient></defs><rect x="0.5" y="0.5" width="37" height="30.5" rx="1.5" fill="#fdfdfd" stroke="#cfd4da" stroke-width="1"/><rect x="3.7" y="3.4" width="30.6" height="24.2" fill="url(#ms2)" stroke="#0d5ba6" stroke-width="1.5"/><rect x="5" y="4.7" width="28" height="21.6" fill="none" stroke="#7fc4f2" stroke-width="1"/><path d="M6 40.5C8 35 13 32.3 19 32.3C25 32.3 30 35 32 40.5Z" fill="#f1f1f1" stroke="#c4c4c4" stroke-width="0.8"/><text x="19" y="21.5" text-anchor="middle" font-size="11.5" font-weight="bold" fill="#0b4f94" style="font-family:'Liberation Serif',serif">v.2</text></svg>
<svg style="left:593px;top:1029px;" width="47" height="46" viewBox="0 0 47 46"><defs><linearGradient id="fy" x1="0" y1="0" x2="0" y2="1"><stop offset="0" stop-color="#fbe9a4"/><stop offset="1" stop-color="#eac65a"/></linearGradient><linearGradient id="fb" x1="0" y1="0" x2="0" y2="1"><stop offset="0" stop-color="#a8e0fa"/><stop offset="1" stop-color="#4ba6de"/></linearGradient></defs><path d="M2 6C2 3 3 1.5 5.5 1.5H19C21 1.5 22 3 22 5.5V40H2Z" fill="#f2d77e" stroke="#c9a53c" stroke-width="0.8"/><rect x="8" y="3.3" width="12" height="3" fill="#fff"/><rect x="5.5" y="3.3" width="2.4" height="2.6" fill="#3aa845"/><path d="M12 9C12 6.5 13 5 15.5 5H33C35 5 36 6.5 36 9V40H12Z" fill="#f4da84" stroke="#c9a53c" stroke-width="0.8"/><rect x="19" y="6.8" width="14" height="3" fill="#fff"/><rect x="16.3" y="6.8" width="2.4" height="2.6" fill="#e23a2e"/><path d="M24 12.5C24 10 25 8.5 27.5 8.5H43C45 8.5 46 10 46 12V14H24Z" fill="#f4da84" stroke="#c9a53c" stroke-width="0.8"/><rect x="31" y="10.2" width="12.5" height="3" fill="#fff"/><rect x="28.3" y="10.2" width="2.4" height="2.6" fill="#2f86d6"/><path d="M1 14.5C1 13 2 12 3.5 12H44C45.5 12 46.5 13 46.5 14.5V41.5C46.5 43 45.5 44 44 44H3.5C2 44 1 43 1 41.5Z" fill="url(#fy)" stroke="#c9a53c" stroke-width="0.9"/><path d="M6 32C6 29.5 7.5 28 10 28H37C39.5 28 41 29.5 41 32V44.5H31V38.5C31 37.5 30.3 37 29.5 37H17.5C16.7 37 16 37.5 16 38.5V44.5H6Z" fill="url(#fb)" stroke="#3c8fc8" stroke-width="0.9"/><path d="M9 20L10.2 26.5L16.5 28L10.2 29.5L9 36L7.8 29.5L1.5 28L7.8 26.5Z" fill="#fff" opacity="0.85"/></svg>
<svg style="left:676px;top:1030px;" width="48" height="44" viewBox="0 0 48 44"><rect x="11" y="0.8" width="36" height="42.4" rx="2.2" fill="#103f91"/><path d="M13.2 0.8H44.8C46 0.8 47 1.8 47 3V11.4H11V3C11 1.8 12 0.8 13.2 0.8Z" fill="#41a5ee"/><rect x="11" y="11.4" width="36" height="10.6" fill="#2b7cd3"/><rect x="11" y="22" width="36" height="10.6" fill="#185abd"/><rect x="0" y="10" width="24" height="24" rx="2" fill="#185abd"/><path d="M4.2 15H7.2L9 24.5L11 15H13.4L15.4 24.5L17.2 15H20L16.9 29H14L12.1 20L10.1 29H7.3Z" fill="#fff"/></svg>
<svg style="left:761px;top:1029px;" width="46" height="46" viewBox="0 0 46 46"><defs><linearGradient id="sk1" x1="0" y1="0" x2="1" y2="1"><stop offset="0" stop-color="#12b8f2"/><stop offset="1" stop-color="#0086e0"/></linearGradient></defs><circle cx="12" cy="12" r="11.3" fill="#0fb3ef"/><circle cx="35" cy="34.5" r="10.8" fill="#0a8ee0"/><circle cx="23" cy="23" r="19.6" fill="url(#sk1)"/><text x="23.2" y="33.5" text-anchor="middle" font-size="29" font-weight="bold" fill="#fff" textLength="16.5" lengthAdjust="spacingAndGlyphs">S</text></svg>
<svg style="left:846px;top:1030px;" width="46" height="48" viewBox="0 0 46 48"><defs><linearGradient id="tg1" x1="0" y1="0" x2="0" y2="1"><stop offset="0" stop-color="#37aee2"/><stop offset="1" stop-color="#1e96c8"/></linearGradient></defs><circle cx="22" cy="21.7" r="21.5" fill="url(#tg1)"/><path d="M8.5 21.5L33.5 11.3C34.8 10.8 35.7 11.6 35.3 13.2L31 33.3C30.7 34.8 29.8 35.1 28.6 34.4L22.1 29.6L19 32.6C18.6 33 18.3 33.3 17.6 33.3L18.1 26.7L30.2 15.8C30.7 15.3 30.1 15.1 29.4 15.5L14.5 24.9L8.1 22.9C6.7 22.5 6.7 21.5 8.5 21.5Z" fill="#fff"/><rect x="24" y="31" width="21.5" height="16.5" rx="4.5" fill="#8d8d8d"/><text x="34.7" y="44" text-anchor="middle" font-size="12.5" fill="#e9e9e9" textLength="18" lengthAdjust="spacingAndGlyphs">..41</text></svg>
<svg style="left:928px;top:1027px;" width="50" height="52" viewBox="0 0 50 52"><circle cx="24" cy="24.7" r="24" fill="#fff"/><path d="M24 24.7L3.2 12.7A24 24 0 0 1 44.8 12.7Z" fill="#e33b2e"/><path d="M3.2 12.7A24 24 0 0 1 44.8 12.7L24 12.7Z" fill="#e33b2e"/><path d="M44.8 12.7A24 24 0 0 1 24 48.7L34.4 30.7L24 12.7Z" fill="#fbc116"/><path d="M24 48.7A24 24 0 0 1 3.2 12.7L13.6 30.7L24 30.7L34.4 30.7Z" fill="#2da94f"/><path d="M24 12.7H44.8A24 24 0 0 1 24 48.7L34.4 30.7A12 12 0 0 0 24 12.7Z" fill="#fbc116"/><path d="M3.2 12.7L13.6 30.7A12 12 0 0 1 24 12.7H44.8A24 24 0 0 0 3.2 12.7Z" fill="#e33b2e"/><circle cx="24" cy="24.7" r="11.6" fill="#fff"/><circle cx="24" cy="24.7" r="9.2" fill="#3f82ee"/><circle cx="35.8" cy="36.7" r="11.6" fill="#b146c2" stroke="#9a3aab" stroke-width="0.8" stroke-dasharray="2 1.2"/><rect x="32.8" y="31.5" width="6" height="9" rx="1" fill="#e7c6ee"/><rect x="34" y="33.5" width="3.6" height="5" fill="#b146c2"/><rect x="33.8" y="30.2" width="4" height="1.6" fill="#e7c6ee"/></svg>
<div style="left:1014px;top:1029px;width:44px;height:42px;background:#0a2431;border:2px solid #add5ec;box-shadow:1px 1px 2px rgba(0,0,0,.4);"></div>
<span class="t" style="left:1022.83px;top:1035.00px;font-size:29px;line-height:29px;color:#add5ec;transform:scaleX(1.0459);-webkit-text-stroke:0.7px #add5ec;">Lr</span>
<svg style="left:1097px;top:1028px;" width="46" height="44" viewBox="0 0 46 44"><defs><linearGradient id="ps1" x1="0" y1="0" x2="0" y2="1"><stop offset="0" stop-color="#0c62c4"/><stop offset="1" stop-color="#0a3f8e"/></linearGradient></defs><path d="M1 2L5 0.8H41L45 4.5H5Z" fill="#35b6f2"/><path d="M1 2L5 4.5V43.5L1 40Z" fill="#0a2f6e"/><rect x="5" y="4.5" width="40" height="39" fill="url(#ps1)"/><text x="25" y="34" text-anchor="middle" font-size="27" font-weight="bold" fill="#3cc0ff" textLength="28" lengthAdjust="spacingAndGlyphs">Ps</text></svg>
<svg style="left:1181px;top:1029px;" width="46" height="46" viewBox="0 0 46 46"><defs><linearGradient id="sc1" x1="0" y1="0" x2="1" y2="1"><stop offset="0" stop-color="#34495e"/><stop offset="1" stop-color="#121c28"/></linearGradient><linearGradient id="sc2" x1="0" y1="0" x2="0" y2="1"><stop offset="0" stop-color="#8e9499"/><stop offset="1" stop-color="#c9ced2"/></linearGradient></defs><rect x="0.8" y="0.8" width="38" height="38" rx="4" fill="url(#sc1)" stroke="#0c141c" stroke-width="1"/><rect x="17.5" y="14.5" width="26.5" height="22" fill="url(#sc2)" stroke="#fff" stroke-width="2.2"/><path d="M26 38H36V40.5H41V43H21V40.5H26Z" fill="#e8e8e8"/><path d="M4.5 31H9L10.5 28.5H16L17.5 31H21.5V44.5H4.5Z" fill="#d6d8da" stroke="#8c8f92" stroke-width="0.9"/><circle cx="13" cy="37.5" r="4.4" fill="#1c2f4a" stroke="#f2f2f2" stroke-width="1.3"/><circle cx="12" cy="36.5" r="1.2" fill="#9bbde0"/></svg>
<div style="left:1264px;top:1028px;width:48px;height:48px;background:#fff;"></div>
<svg style="left:1270px;top:1034px;" width="38" height="36" viewBox="0 0 38 36"><circle cx="18" cy="18" r="17" fill="#102a5c"/><path d="M18 1A17 17 0 0 1 35 18C35 25 31 30.5 25.5 33.3C28 27 26 22 20 19C14 16.5 9 17 5.5 10C8 4.5 12.5 1 18 1Z" fill="#f56a10"/><path d="M5.5 11C7 16 11 17.5 16 19.5C22 22 24.5 27 22 34C27 30 27.5 24 22 20C17 16.5 8 17 5.5 11Z" fill="#fff"/><path d="M9.5 14.5L20.5 5.5L36.5 20L34.5 21.5L20.5 9L11.5 16.2Z" fill="#fff"/><path d="M12.5 4.5H15.5V10H12.5Z" fill="#fff"/><rect x="18.5" y="12.5" width="4.2" height="4.2" fill="#fff"/><path d="M20.6 12.5V16.7M18.5 14.6H22.7" stroke="#f56a10" stroke-width="0.7"/></svg>
<svg style="left:1348px;top:1028px;" width="48" height="48" viewBox="0 0 48 48"><defs><linearGradient id="zm" x1="0.2" y1="0" x2="0.6" y2="1"><stop offset="0" stop-color="#1a6bff"/><stop offset="1" stop-color="#0848d8"/></linearGradient></defs><path d="M24 0C40 0 48 6 48 24C48 42 40 48 24 48C8 48 0 42 0 24C0 6 8 0 24 0Z" fill="url(#zm)"/><text x="24" y="28.4" text-anchor="middle" font-size="13.5" fill="#fff" stroke="#fff" stroke-width="0.45" textLength="34" lengthAdjust="spacingAndGlyphs">zoom</text></svg>
<svg style="left:1562px;top:1049px;" width="14" height="9" viewBox="0 0 14 9"><path d="M0.8 8.2L7 1.2L13.2 8.2Z" fill="#f4f6fa"/><path d="M0.8 8.2H13.2" stroke="#c4cbe0" stroke-width="1"/></svg>
<svg style="left:1600px;top:1040px;" width="24" height="25" viewBox="0 0 24 25"><path d="M1.5 1V24" stroke="#fff" stroke-width="2"/><path d="M4 2.5C8 0.5 11 1.5 13 4C15.5 7 19 7.5 23 5.5C21 10 20.5 12 19 14.5C15 16.5 12 15.5 10 13.5C8 11.5 6 11.5 4 13Z" fill="#fff"/></svg>
<svg style="left:1635px;top:1039px;" width="25" height="27" viewBox="0 0 25 27"><rect x="11.5" y="4.5" width="12" height="20.5" rx="2" fill="none" stroke="#fff" stroke-width="2"/><rect x="14.5" y="1.5" width="6" height="3" fill="#fff"/><rect x="14.3" y="7.5" width="6.4" height="14.5" fill="#fff"/><path d="M2.5 3V8M7.5 3V8" stroke="#fff" stroke-width="1.8"/><path d="M0.5 8H9.5V11C9.5 13.5 8 15 6 15V23H4V15C2 15 0.5 13.5 0.5 11Z" fill="#fff"/></svg>
<svg style="left:1672px;top:1044px;" width="22" height="20" viewBox="0 0 22 20"><rect x="0.5" y="16" width="2.6" height="3" fill="#fff"/><rect x="4.6" y="13" width="3" height="6" fill="#fff"/><rect x="9" y="9.5" width="3.2" height="9.5" fill="#fff"/><rect x="13.5" y="5.5" width="3.2" height="13.5" fill="#fff"/><rect x="18" y="1.5" width="3.2" height="17.5" fill="#fff"/></svg>
<svg style="left:1710px;top:1042px;" width="21" height="23" viewBox="0 0 21 23"><path d="M1 6.5H5L11.5 0.8V21.5L5 15.8H1Z" fill="#fff"/><path d="M3.3 6.5V15.8" stroke="#646464" stroke-width="0.8"/><path d="M15.5 5.5C18 9 18 13.5 15.5 17" fill="none" stroke="#fff" stroke-width="1.4"/></svg>
<span class="t" style="left:1751.44px;top:1046.00px;font-size:18px;line-height:18px;color:#fff;transform:scaleX(0.9055);">РУС</span>
<span class="t" style="left:1829.82px;top:1033.00px;font-size:18px;line-height:18px;color:#fff;transform:scaleX(1.0065);">20:55</span>
<span class="t" style="left:1807.84px;top:1059.00px;font-size:18px;line-height:18px;color:#fff;transform:scaleX(0.9917);">24.06.2023</span>
</body></html>
